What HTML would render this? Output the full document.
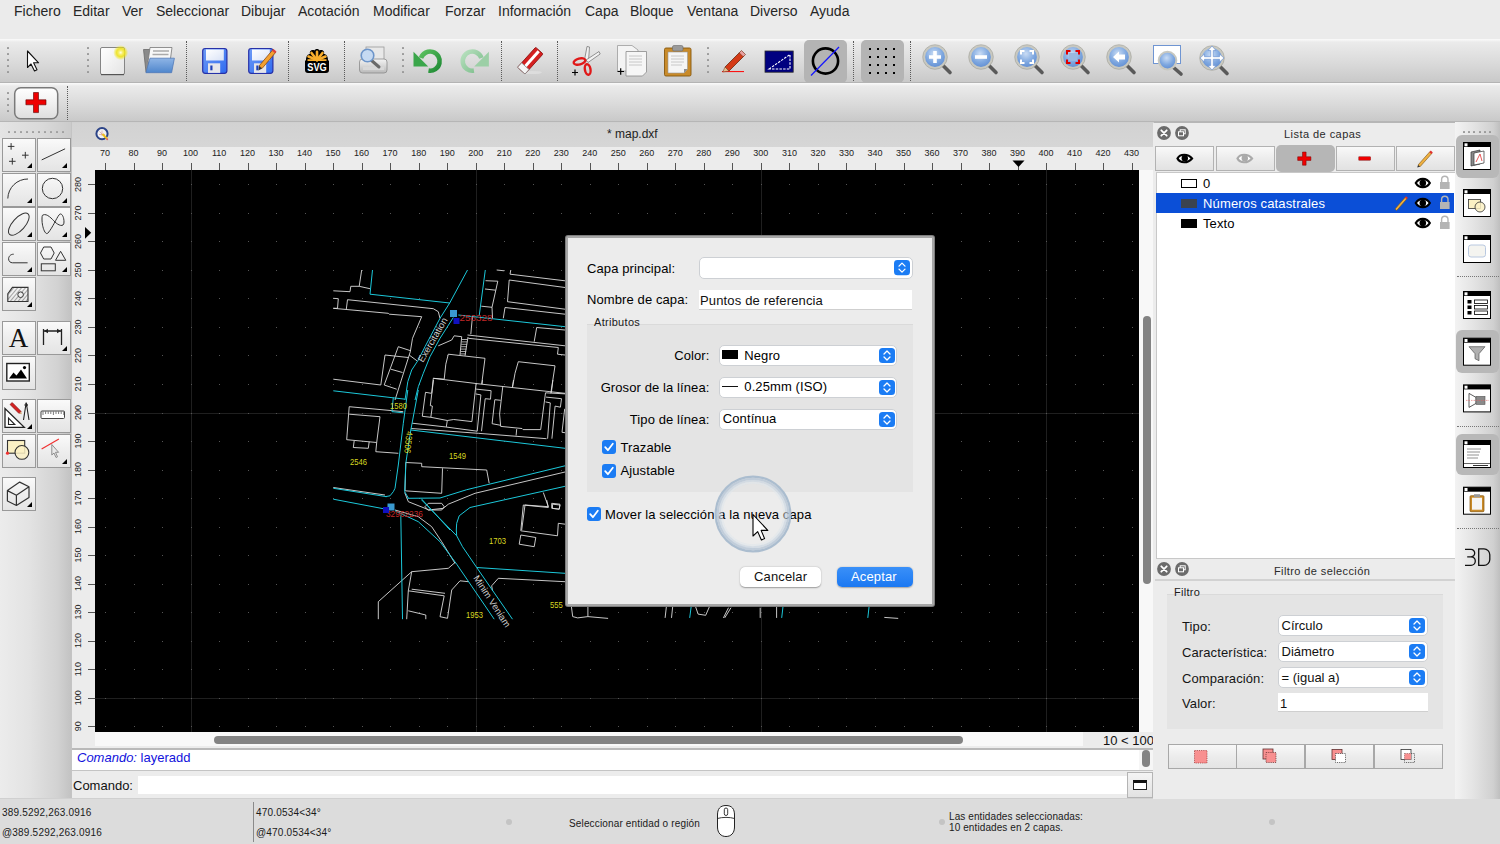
<!DOCTYPE html>
<html><head><meta charset="utf-8">
<style>
*{margin:0;padding:0;box-sizing:border-box}
html,body{width:1500px;height:844px;overflow:hidden;background:#ebebeb;font-family:"Liberation Sans",sans-serif;color:#222}
.a{position:absolute}
.t{position:absolute;white-space:nowrap;line-height:1}
svg{position:absolute;overflow:visible}
.tb{background:linear-gradient(#f6f6f6 0,#ebebeb 2px,#dadada 55%,#c9c9c9 100%)}
.grip i{position:absolute;width:2.4px;height:2.4px;background:#9a9a9a;border-radius:0.5px}
.vsep{position:absolute;width:0;border-left:1px dotted #5a5a5a}
.btn{position:absolute;background:linear-gradient(#fafafa,#f0f0f0 40%,#e4e4e4);border:1px solid #999}
.tri{position:absolute;right:3px;bottom:3px;width:0;height:0;border-left:5px solid transparent;border-bottom:5px solid #000}
</style></head><body>
<div class="a" style="left:0;top:0;width:1500px;height:39px;background:#ebebeb"><span class="t" style="left:14px;top:4px;font-size:14px;color:#262626">Fichero</span><span class="t" style="left:73px;top:4px;font-size:14px;color:#262626">Editar</span><span class="t" style="left:122px;top:4px;font-size:14px;color:#262626">Ver</span><span class="t" style="left:156px;top:4px;font-size:14px;color:#262626">Seleccionar</span><span class="t" style="left:241px;top:4px;font-size:14px;color:#262626">Dibujar</span><span class="t" style="left:298px;top:4px;font-size:14px;color:#262626">Acotación</span><span class="t" style="left:373px;top:4px;font-size:14px;color:#262626">Modificar</span><span class="t" style="left:445px;top:4px;font-size:14px;color:#262626">Forzar</span><span class="t" style="left:498px;top:4px;font-size:14px;color:#262626">Información</span><span class="t" style="left:585px;top:4px;font-size:14px;color:#262626">Capa</span><span class="t" style="left:630px;top:4px;font-size:14px;color:#262626">Bloque</span><span class="t" style="left:687px;top:4px;font-size:14px;color:#262626">Ventana</span><span class="t" style="left:750px;top:4px;font-size:14px;color:#262626">Diverso</span><span class="t" style="left:810px;top:4px;font-size:14px;color:#262626">Ayuda</span></div>
<div class="a tb" style="left:0;top:39px;width:1500px;height:44px;border-top:1px solid #f8f8f8;border-bottom:1px solid #b4b4b4"></div><div class="a tb" style="left:0;top:83px;width:1500px;height:40px;border-top:1px solid #f8f8f8;border-bottom:2px solid #b6b6b6"></div><div class="grip"><i style="left:7px;top:47px"></i><i style="left:7px;top:53px"></i><i style="left:7px;top:59px"></i><i style="left:7px;top:65px"></i><i style="left:7px;top:71px"></i><i style="left:87px;top:47px"></i><i style="left:87px;top:53px"></i><i style="left:87px;top:59px"></i><i style="left:87px;top:65px"></i><i style="left:87px;top:71px"></i><i style="left:402px;top:47px"></i><i style="left:402px;top:53px"></i><i style="left:402px;top:59px"></i><i style="left:402px;top:65px"></i><i style="left:402px;top:71px"></i><i style="left:707px;top:47px"></i><i style="left:707px;top:53px"></i><i style="left:707px;top:59px"></i><i style="left:707px;top:65px"></i><i style="left:707px;top:71px"></i><i style="left:7px;top:92px"></i><i style="left:7px;top:98px"></i><i style="left:7px;top:104px"></i><i style="left:7px;top:110px"></i></div><div class="vsep" style="left:186px;top:41px;height:40px"></div><div class="vsep" style="left:288px;top:41px;height:40px"></div><div class="vsep" style="left:344px;top:41px;height:40px"></div><div class="vsep" style="left:501px;top:41px;height:40px"></div><div class="vsep" style="left:557px;top:41px;height:40px"></div><div class="vsep" style="left:853px;top:41px;height:40px"></div><div class="vsep" style="left:910px;top:41px;height:40px"></div><div class="vsep" style="left:67px;top:86px;height:34px"></div><svg style="left:0;top:0" width="1500" height="122" viewBox="0 0 1500 122">
<defs>
<linearGradient id="gPage" x1="0" y1="0" x2="1" y2="1"><stop offset="0" stop-color="#ffffff"/><stop offset="1" stop-color="#e4e4e4"/></linearGradient>
<radialGradient id="gGlow"><stop offset="0" stop-color="#fffde8"/><stop offset="0.25" stop-color="#f8f070"/><stop offset="0.55" stop-color="#eee21a" stop-opacity="0.9"/><stop offset="1" stop-color="#f0e800" stop-opacity="0"/></radialGradient>
<linearGradient id="gBlueF" x1="0" y1="0" x2="0" y2="1"><stop offset="0" stop-color="#8fb5e6"/><stop offset="1" stop-color="#4f86cc"/></linearGradient>
<linearGradient id="gFlop" x1="0" y1="0" x2="1" y2="1"><stop offset="0" stop-color="#6f9cf6"/><stop offset="1" stop-color="#2f6af0"/></linearGradient>
<linearGradient id="gLbl" x1="0" y1="0" x2="1" y2="1"><stop offset="0" stop-color="#ffffff"/><stop offset="1" stop-color="#d9e2f6"/></linearGradient>
<linearGradient id="gPrn" x1="0" y1="0" x2="0" y2="1"><stop offset="0" stop-color="#f4f4f4"/><stop offset="1" stop-color="#b9b9b9"/></linearGradient>
<radialGradient id="gZoom" cx="0.45" cy="0.35" r="0.7"><stop offset="0" stop-color="#c9dcf4"/><stop offset="0.55" stop-color="#7fa8e0"/><stop offset="1" stop-color="#5a88cf"/></radialGradient>
<linearGradient id="gBtn" x1="0" y1="0" x2="0" y2="1"><stop offset="0" stop-color="#ffffff"/><stop offset="0.5" stop-color="#f0f0f0"/><stop offset="1" stop-color="#dedede"/></linearGradient>
</defs>
<!-- pointer -->
<path d="M27.5,51 L27.5,67.5 L31,64 L34.5,71 L37,69.8 L33.6,62.8 L38.6,62.8 Z" fill="#fff" stroke="#111" stroke-width="1.1" stroke-linejoin="round"/>
<!-- new doc -->
<rect x="100.5" y="47.5" width="24" height="27" rx="1.5" fill="url(#gPage)" stroke="#858585"/>
<line x1="101" y1="74.6" x2="124" y2="74.6" stroke="#555" stroke-width="1.2"/>
<circle cx="120.7" cy="52.6" r="7.5" fill="url(#gGlow)"/>
<!-- open folder -->
<path d="M143.5,49.5 L150,49.5 L150,72 L146,72 Z" fill="#8a8a8a" stroke="#6a6a6a" stroke-width="0.8"/>
<path d="M150,47.5 L172,47.5 L170,62 L148,62 Z" fill="#f7f7f7" stroke="#777" stroke-width="0.8"/>
<line x1="153" y1="51" x2="169" y2="51" stroke="#aaa" stroke-width="1.5"/>
<line x1="152.5" y1="54.5" x2="168.5" y2="54.5" stroke="#aaa" stroke-width="1.5"/>
<path d="M150,58.2 L174.4,58.2 L171.6,72.7 L145.9,72.7 Z" fill="url(#gBlueF)" stroke="#5079b8" stroke-width="0.8"/>
<!-- save -->
<rect x="202.7" y="48.5" width="24.2" height="24.8" rx="2.5" fill="url(#gFlop)" stroke="#2731a8" stroke-width="1.2"/>
<rect x="206" y="49.5" width="17.8" height="11" fill="url(#gLbl)"/>
<rect x="208" y="63.3" width="12.2" height="9.6" fill="#e6e6ea"/>
<rect x="210.3" y="65.5" width="2.2" height="4.8" fill="#1d3fb8"/>
<!-- save as -->
<rect x="248.7" y="48.5" width="24.2" height="24.8" rx="2.5" fill="url(#gFlop)" stroke="#2731a8" stroke-width="1.2"/>
<rect x="252" y="49.5" width="17.8" height="11" fill="url(#gLbl)"/>
<rect x="254" y="63.3" width="12.2" height="9.6" fill="#e6e6ea"/>
<rect x="256.3" y="65.5" width="2.2" height="4.8" fill="#1d3fb8"/>
<path d="M259,66 L273,49.5 L276,52 L262,68.5 Z" fill="#f3a030" stroke="#8a4a10" stroke-width="0.8"/>
<path d="M259,66 L262,68.5 L258.5,70.5 Z" fill="#333"/>
<path d="M272,50.7 L273.5,49 L276.5,51.5 L275,53.2 Z" fill="#e04040"/>
<!-- svg -->
<path d="M306,60 C306,56 308,54 310,54 C309,51 312,49 314.5,50.5 C315,48.5 319,48.5 319.5,50.5 C322,49 325,51 324,54 C326,54 328,56 328,60 L329,61 L329,70 C329,72 328,73 326,73 L308,73 C306,73 305,72 305,70 L305,61 Z" fill="#000"/>
<g stroke="#f9ae2c" stroke-width="2.6" stroke-linecap="round">
<line x1="317" y1="60" x2="317" y2="51.8"/><line x1="317" y1="60" x2="311.5" y2="53"/><line x1="317" y1="60" x2="322.5" y2="53"/><line x1="317" y1="60" x2="308.5" y2="56.5"/><line x1="317" y1="60" x2="325.5" y2="56.5"/>
</g>
<rect x="307.5" y="59.2" width="19" height="1.8" fill="#f9ae2c"/>
<text x="317" y="71.3" font-family="Liberation Sans" font-weight="bold" font-size="11" fill="#fff" text-anchor="middle" textLength="19.5" lengthAdjust="spacingAndGlyphs">SVG</text>
<!-- print preview -->
<rect x="366" y="47" width="18" height="14" fill="#e8e8e8" stroke="#9a9a9a" stroke-width="0.8"/>
<rect x="359.5" y="59" width="27.5" height="14" rx="3" fill="url(#gPrn)" stroke="#8c8c8c" stroke-width="0.8"/>
<rect x="363" y="67" width="21" height="3" fill="#d8d8d8"/>
<line x1="371" y1="60" x2="379" y2="67" stroke="#6a6a6a" stroke-width="3" stroke-linecap="round"/>
<circle cx="367.5" cy="55.5" r="6.3" fill="#c6daf2" stroke="#6d95c9" stroke-width="1.6"/>
<!-- undo -->
<defs><linearGradient id="gUndo" x1="0" y1="0" x2="1" y2="1"><stop offset="0" stop-color="#5cc060"/><stop offset="1" stop-color="#1f8a34"/></linearGradient>
<linearGradient id="gRedo" x1="0" y1="0" x2="1" y2="1"><stop offset="0" stop-color="#b8e0bf"/><stop offset="1" stop-color="#7bbd8a"/></linearGradient></defs>
<path d="M421,58 A9.6,9.6 0 1 1 428.5,70.6" fill="none" stroke="url(#gUndo)" stroke-width="4.6"/>
<path d="M413.5,51.8 L413.5,66.6 L428.2,66.6 Z" fill="#3aa64a"/>
<path d="M481.4,58 A9.6,9.6 0 1 0 473.9,70.6" fill="none" stroke="url(#gRedo)" stroke-width="4.6"/>
<path d="M488.9,51.8 L488.9,66.6 L474.2,66.6 Z" fill="#9ccfa6"/>
<!-- eraser -->
<ellipse cx="532" cy="72.5" rx="10" ry="1.6" fill="#ddd"/>
<g transform="rotate(-48 530 61)">
<rect x="517" y="56" width="27" height="10" rx="1" fill="#d42020" stroke="#8a1010" stroke-width="0.8"/>
<rect x="518" y="59.5" width="25" height="3" fill="#fff"/>
<rect x="517" y="56" width="6" height="10" fill="#f4f4f4" stroke="#888" stroke-width="0.8"/>
</g>
<!-- scissors -->
<path d="M584.5,60 L587,46.5 L589.5,47 L588.5,61 Z" fill="#f2f2f2" stroke="#7a7a7a" stroke-width="0.8"/>
<path d="M586,60 L599,51.5 L600.2,54 L588,62.5 Z" fill="#f2f2f2" stroke="#7a7a7a" stroke-width="0.8"/>
<ellipse cx="579.5" cy="61.5" rx="6" ry="3" transform="rotate(-15 579.5 61.5)" fill="none" stroke="#e01818" stroke-width="2.4"/>
<ellipse cx="587.7" cy="69.5" rx="2.8" ry="5.3" transform="rotate(-10 587.7 69.5)" fill="none" stroke="#e01818" stroke-width="2.4"/>
<path d="M572,72.5 h6 M575,69.5 v6" stroke="#000" stroke-width="1.2"/>
<!-- copy -->
<path d="M617.5,45.5 L632,45.5 L638,50 L638,71 L617.5,71 Z" fill="#f4f4f4" stroke="#9c9c9c" stroke-width="0.8"/>
<path d="M626,51.5 L646.5,51.5 L646.5,72 L642.5,76 L626,76 Z" fill="#f6f6f6" stroke="#8c8c8c" stroke-width="0.8"/>
<path d="M629,56 h13 M629,59 h13 M629,62 h13 M629,65 h13" stroke="#bdbdbd" stroke-width="0.8"/>
<path d="M617.5,71.5 h6.5 M620.7,68.3 v6.5" stroke="#000" stroke-width="1.2"/>
<!-- paste -->
<rect x="664.5" y="48" width="26.5" height="28" rx="1.5" fill="#c98b2a" stroke="#87570c" stroke-width="0.9"/>
<path d="M668,52 L687.5,52 L687.5,69 L684,73 L668,73 Z" fill="#f5f5f5" stroke="#999" stroke-width="0.6"/>
<path d="M671,56 h13 M671,59 h13 M671,62 h13 M671,65 h11" stroke="#bcbcbc" stroke-width="0.8"/>
<path d="M684,73 L687.5,69 L684,69 Z" fill="#8f8f8f"/>
<rect x="672.5" y="45.5" width="10.5" height="5.5" rx="1.5" fill="#9a9a9a" stroke="#6a6a6a" stroke-width="0.6"/>
<!-- pencil -->
<line x1="722" y1="71.6" x2="744" y2="71.6" stroke="#ff0000" stroke-width="1"/>
<path d="M725,67 L740,52 L744,56 L729,71 Z" fill="#d43a16" stroke="#6a2a10" stroke-width="0.8"/>
<path d="M739.2,52.8 L741.5,50.5 L745.5,54.5 L743.2,56.8 Z" fill="#e8a0a0" stroke="#6a2a10" stroke-width="0.6"/>
<path d="M725,67 L729,71 L722.8,72 Z" fill="#e8c090" stroke="#6a2a10" stroke-width="0.5"/>
<!-- blue rect -->
<rect x="765" y="51" width="28.2" height="21.2" fill="#000080" stroke="#2a2a2a" stroke-width="0.8"/>
<path d="M769,69 L790,54.5 L790,69 Z" fill="none" stroke="#ffffff" stroke-width="1.1" stroke-dasharray="2.5,1.2"/>
<!-- selected circle btn -->
<rect x="804" y="40" width="43" height="42.7" rx="5" fill="#b4b4b4"/>
<circle cx="825.5" cy="61" r="12.6" fill="none" stroke="#000" stroke-width="2.6"/>
<line x1="811" y1="75.5" x2="839" y2="47" stroke="#1414ff" stroke-width="1.2"/>
<!-- grid btn -->
<rect x="861" y="40" width="43" height="42.7" rx="5" fill="#b4b4b4"/>
<g fill="#000">
<rect x="869" y="48" width="2" height="2"/><rect x="877" y="48" width="2" height="2"/><rect x="885" y="48" width="2" height="2"/><rect x="893" y="48" width="2" height="2"/><rect x="869" y="56" width="2" height="2"/><rect x="877" y="56" width="2" height="2"/><rect x="885" y="56" width="2" height="2"/><rect x="893" y="56" width="2" height="2"/><rect x="869" y="64" width="2" height="2"/><rect x="877" y="64" width="2" height="2"/><rect x="885" y="64" width="2" height="2"/><rect x="893" y="64" width="2" height="2"/><rect x="869" y="72" width="2" height="2"/><rect x="877" y="72" width="2" height="2"/><rect x="885" y="72" width="2" height="2"/><rect x="893" y="72" width="2" height="2"/></g>
<line x1="942" y1="64.5" x2="950" y2="72.5" stroke="#5a5a5a" stroke-width="3.6" stroke-linecap="round"/><circle cx="935" cy="57" r="11" fill="url(#gZoom)" stroke="#c8c8c0" stroke-width="2.2"/><circle cx="935" cy="57" r="12.3" fill="none" stroke="#9a9a90" stroke-width="0.6"/><path d="M929,57 h12 M935,51 v12" stroke="#fff" stroke-width="3.6"/><line x1="988" y1="64.5" x2="996" y2="72.5" stroke="#5a5a5a" stroke-width="3.6" stroke-linecap="round"/><circle cx="981" cy="57" r="11" fill="url(#gZoom)" stroke="#c8c8c0" stroke-width="2.2"/><circle cx="981" cy="57" r="12.3" fill="none" stroke="#9a9a90" stroke-width="0.6"/><path d="M975,57 h12" stroke="#fff" stroke-width="3.6"/><line x1="1034" y1="64.5" x2="1042" y2="72.5" stroke="#5a5a5a" stroke-width="3.6" stroke-linecap="round"/><circle cx="1027" cy="57" r="11" fill="url(#gZoom)" stroke="#c8c8c0" stroke-width="2.2"/><circle cx="1027" cy="57" r="12.3" fill="none" stroke="#9a9a90" stroke-width="0.6"/><path d="M1021,54.5 v-3.5 h3.5 M1029.5,51 h3.5 v3.5 M1033,59.5 v3.5 h-3.5 M1024.5,63 h-3.5 v-3.5" fill="none" stroke="#fff" stroke-width="2"/><line x1="1080" y1="64.5" x2="1088" y2="72.5" stroke="#5a5a5a" stroke-width="3.6" stroke-linecap="round"/><circle cx="1073" cy="57" r="11" fill="url(#gZoom)" stroke="#c8c8c0" stroke-width="2.2"/><circle cx="1073" cy="57" r="12.3" fill="none" stroke="#9a9a90" stroke-width="0.6"/><path d="M1067,54.5 v-3.5 h3.5 M1075.5,51 h3.5 v3.5 M1079,59.5 v3.5 h-3.5 M1070.5,63 h-3.5 v-3.5" fill="none" stroke="#e00000" stroke-width="2"/><rect x="1069" y="53" width="8" height="8" fill="#9ab8e0"/><line x1="1126" y1="64.5" x2="1134" y2="72.5" stroke="#5a5a5a" stroke-width="3.6" stroke-linecap="round"/><circle cx="1119" cy="57" r="11" fill="url(#gZoom)" stroke="#c8c8c0" stroke-width="2.2"/><circle cx="1119" cy="57" r="12.3" fill="none" stroke="#9a9a90" stroke-width="0.6"/><path d="M1113,57 L1119,51.5 L1119,54.5 L1125,54.5 L1125,59.5 L1119,59.5 L1119,62.5 Z" fill="#fff"/><rect x="1153.5" y="45.5" width="27" height="18" fill="#fff" stroke="#6f95d2" stroke-width="1"/><line x1="1173" y1="67" x2="1181" y2="74" stroke="#5a5a5a" stroke-width="3.6" stroke-linecap="round"/><circle cx="1167.5" cy="60.6" r="8.8" fill="url(#gZoom)" stroke="#c8c8c0" stroke-width="2"/><line x1="1219" y1="65.5" x2="1227" y2="73.5" stroke="#5a5a5a" stroke-width="3.6" stroke-linecap="round"/><circle cx="1212" cy="58" r="11" fill="url(#gZoom)" stroke="#c8c8c0" stroke-width="2.2"/><circle cx="1212" cy="58" r="12.3" fill="none" stroke="#9a9a90" stroke-width="0.6"/><path d="M1212,46 L1216,50.5 L1213.3,50.5 L1213.3,56.7 L1219.5,56.7 L1219.5,54 L1224,58 L1219.5,62 L1219.5,59.3 L1213.3,59.3 L1213.3,65.5 L1216,65.5 L1212,70 L1208,65.5 L1210.7,65.5 L1210.7,59.3 L1204.5,59.3 L1204.5,62 L1200,58 L1204.5,54 L1204.5,56.7 L1210.7,56.7 L1210.7,50.5 L1208,50.5 Z" fill="#fff" stroke="#6f95d2" stroke-width="0.7"/><rect x="14.7" y="87.7" width="43" height="31" rx="6" fill="url(#gBtn)" stroke="#7a7a7a" stroke-width="1.5"/><path d="M33.5,92.5 h5 v7.3 h7.5 v5 h-7.5 v7.8 h-5 v-7.8 h-7.6 v-5 h7.6 Z" fill="#ee0000" stroke="#5a0000" stroke-width="0.6"/></svg>
<div class="a" style="left:0;top:122px;width:72px;height:677px;background:linear-gradient(90deg,#ececec 0,#e3e3e3 40%,#d2d2d2 80%,#c3c3c3 98%,#d6d6d6 100%)"></div><div class="a" style="left:0;top:122px;width:71px;height:16px;background:linear-gradient(90deg,#e4e4e4,#d9d9d9 60%,#cbcbcb)"></div><div class="a" style="left:71px;top:122px;width:1px;height:677px;background:#c4c4c4"></div><div class="grip"><i style="left:7.5px;top:131px;width:2.2px;height:2.2px;background:#a0a0a0"></i><i style="left:13.5px;top:131px;width:2.2px;height:2.2px;background:#a0a0a0"></i><i style="left:19.5px;top:131px;width:2.2px;height:2.2px;background:#a0a0a0"></i><i style="left:25.5px;top:131px;width:2.2px;height:2.2px;background:#a0a0a0"></i><i style="left:31.5px;top:131px;width:2.2px;height:2.2px;background:#a0a0a0"></i><i style="left:37.5px;top:131px;width:2.2px;height:2.2px;background:#a0a0a0"></i><i style="left:43.5px;top:131px;width:2.2px;height:2.2px;background:#a0a0a0"></i><i style="left:49.5px;top:131px;width:2.2px;height:2.2px;background:#a0a0a0"></i><i style="left:55.5px;top:131px;width:2.2px;height:2.2px;background:#a0a0a0"></i><i style="left:61.5px;top:131px;width:2.2px;height:2.2px;background:#a0a0a0"></i></div><div class="btn" style="left:1.5px;top:137.6px;width:34px;height:34px"><div class="tri"></div></div><div class="btn" style="left:36.5px;top:137.6px;width:34px;height:34px"><div class="tri"></div></div><div class="btn" style="left:1.5px;top:172.5px;width:34px;height:34px"><div class="tri"></div></div><div class="btn" style="left:36.5px;top:172.5px;width:34px;height:34px"><div class="tri"></div></div><div class="btn" style="left:1.5px;top:207.3px;width:34px;height:34px"><div class="tri"></div></div><div class="btn" style="left:36.5px;top:207.3px;width:34px;height:34px"><div class="tri"></div></div><div class="btn" style="left:1.5px;top:242.2px;width:34px;height:34px"><div class="tri"></div></div><div class="btn" style="left:36.5px;top:242.2px;width:34px;height:34px"><div class="tri"></div></div><div class="btn" style="left:1.5px;top:277px;width:34px;height:34px"><div class="tri"></div></div><div class="btn" style="left:1.5px;top:320.6px;width:34px;height:34px"></div><div class="btn" style="left:36.5px;top:320.6px;width:34px;height:34px"><div class="tri"></div></div><div class="btn" style="left:1.5px;top:355.7px;width:34px;height:34px"></div><div class="btn" style="left:1.5px;top:398.5px;width:34px;height:34px"><div class="tri"></div></div><div class="btn" style="left:36.5px;top:398.5px;width:34px;height:34px"></div><div class="btn" style="left:1.5px;top:433.5px;width:34px;height:34px"></div><div class="btn" style="left:36.5px;top:433.5px;width:34px;height:34px"><div class="tri"></div></div><div class="btn" style="left:1.5px;top:476.5px;width:34px;height:34px"><div class="tri"></div></div><svg style="left:0;top:0" width="72" height="520" viewBox="0 0 72 520"><g fill="none" stroke="#333" stroke-width="1"><path d="M7.8,146.4 h6.6 M11.1,143.1 v6.6"/><path d="M22.0,155.2 h6.6 M25.3,151.89999999999998 v6.6"/><path d="M9.0,161.3 h6.6 M12.3,158.0 v6.6"/><line x1="41.7" y1="159.9" x2="65.1" y2="148.8"/><path d="M7.8,198.5 A20,20 0 0 1 28,179"/><circle cx="52.5" cy="188.5" r="10.2"/><ellipse cx="18.8" cy="224.2" rx="13.8" ry="6.2" transform="rotate(-48 18.8 224.2)"/><path d="M43,215 C47,213 52,219 55,222 C58,225 64,228 64,222 C64,216 61,212 59,215 C56,219 53,227 48,233 C45,236 42,226 42,220 C42,217 42,215 43,215 Z"/><path d="M13.7,254.2 C10,254.2 8.6,257 8.6,258.8 C8.6,261.3 10.3,262.8 12.6,262.8 L27.6,262.8"/><path d="M40.5,253 L43.7,247 L51,247 L54.2,253 L51,259 L43.7,259 Z"/><path d="M55.5,260.3 L60.6,251.3 L65.8,260.3 Z"/><rect x="41.3" y="263.8" width="14" height="7"/></g><defs><pattern id="hp" width="3" height="3" patternUnits="userSpaceOnUse" patternTransform="rotate(40)"><line x1="0" y1="0" x2="0" y2="3" stroke="#444" stroke-width="0.9"/></pattern></defs><path d="M7.8,293.7 L12.4,287.4 L28,287.4 L28,301.5 L7.8,301.5 Z" fill="url(#hp)" stroke="#333" stroke-width="1.1"/><circle cx="20.6" cy="294.7" r="2.8" fill="#eee" stroke="#333" stroke-width="1"/><text x="18.5" y="347" font-family="Liberation Serif" font-size="27" text-anchor="middle" fill="#111">A</text><g stroke="#222" stroke-width="1.3" fill="none"><path d="M43.5,329 v16 M61.5,329 v16 M44,331 h17"/></g><path d="M44,331 l4,-2.2 v4.4 Z M61,331 l-4,-2.2 v4.4 Z" fill="#222"/><rect x="6.8" y="363.5" width="22.5" height="17.5" fill="#fff" stroke="#222" stroke-width="1.4"/><path d="M9,378.5 L13.5,372.5 L16.5,375.5 L21,369.5 L27,378.5 Z" fill="#000"/><circle cx="24.5" cy="367.6" r="1.6" fill="#000"/><path d="M5,408.5 L5,427.4 L24.3,427.4 Z" fill="#fff" stroke="#222" stroke-width="1.3"/><path d="M8.5,418 L8.5,424.5 L14.8,424.5 Z" fill="none" stroke="#222" stroke-width="1.1"/><path d="M10,404.5 L12.2,402.5 L21.2,411.5 L19,413.5 Z" fill="#d42222" stroke="#7a1010" stroke-width="0.6"/><path d="M19,413.5 L21.2,411.5 L21.8,414.2 Z" fill="#d0a070"/><path d="M26.2,402.5 L23.5,420 M26.2,402.5 L29,420" stroke="#222" stroke-width="1.1" fill="none"/><circle cx="26.2" cy="405" r="1.3" fill="none" stroke="#222" stroke-width="0.8"/><rect x="41" y="411" width="23.5" height="7.5" rx="1" fill="#fff" stroke="#444" stroke-width="1"/><path d="M43.0,411.5 v3.5 M45.6,411.5 v2.5 M48.2,411.5 v2.5 M50.8,411.5 v2.5 M53.4,411.5 v3.5 M56.0,411.5 v2.5 M58.6,411.5 v2.5 M61.2,411.5 v2.5 M63.8,411.5 v3.5 " stroke="#444" stroke-width="0.7"/><rect x="7.5" y="440.5" width="17.2" height="12.7" fill="#fbf1c4" stroke="#333" stroke-width="1.1"/><circle cx="21.9" cy="452.4" r="6.9" fill="#fbf1c4" fill-opacity="0.85" stroke="#333" stroke-width="1.1"/><circle cx="7.5" cy="453.2" r="1.6" fill="#f03030"/><line x1="41.6" y1="449" x2="58.9" y2="439" stroke="#f03030" stroke-width="1.2"/><path d="M51.8,444.5 L51.8,455 L54,453 L56,457.5 L57.5,456.8 L55.5,452.3 L58.6,452.3 Z" fill="#eaeaea" stroke="#777" stroke-width="0.8"/><path d="M7.4,490.6 L19.7,482.1 L29,486.8 L29,497.5 L16.4,505.5 L7.4,501 Z M7.4,490.6 L16.4,495.2 L29,486.8 M16.4,495.2 L16.4,505.5" fill="none" stroke="#333" stroke-width="1.2" stroke-linejoin="round"/></svg>
<div class="a" style="left:72px;top:122px;width:1082px;height:624px;background:#d0d0d0"></div><div class="a" style="left:72px;top:123px;width:1081px;height:24px;background:linear-gradient(#d2d2d2,#d6d6d6)"></div><span class="t" style="left:607px;top:128px;font-size:12px;color:#1e1e1e">* map.dxf</span><svg style="left:93px;top:125px" width="18" height="18" viewBox="0 0 18 18">
<circle cx="9" cy="8.7" r="5.6" fill="#f2f2f2" stroke="#2c4488" stroke-width="2"/>
<path d="M6,9.5 L12,9.5 M9,5.5 L9,11 M6.5,6.5 L11,11" stroke="#d08080" stroke-width="0.5"/>
<line x1="9.5" y1="9" x2="14" y2="13.8" stroke="#f0c020" stroke-width="2"/><circle cx="14.2" cy="14.2" r="1" fill="#e06060"/>
</svg><div class="a" style="left:72px;top:147px;width:1081px;height:23px;background:#ececec"></div><div class="a" style="left:72px;top:170px;width:23px;height:562px;background:#ececec"></div><div class="a" style="left:72px;top:732px;width:23px;height:14px;background:#ececec"></div><div class="a" style="left:95px;top:170px;width:1044px;height:562px;background:#000"></div><svg style="left:0;top:0" width="1500" height="844" viewBox="0 0 1500 844"><g stroke="#555" stroke-width="1"><line x1="105.5" y1="163" x2="105.5" y2="170"/><line x1="134.5" y1="163" x2="134.5" y2="170"/><line x1="162.5" y1="163" x2="162.5" y2="170"/><line x1="191.5" y1="163" x2="191.5" y2="170"/><line x1="219.5" y1="163" x2="219.5" y2="170"/><line x1="248.5" y1="163" x2="248.5" y2="170"/><line x1="276.5" y1="163" x2="276.5" y2="170"/><line x1="305.5" y1="163" x2="305.5" y2="170"/><line x1="333.5" y1="163" x2="333.5" y2="170"/><line x1="362.5" y1="163" x2="362.5" y2="170"/><line x1="390.5" y1="163" x2="390.5" y2="170"/><line x1="419.5" y1="163" x2="419.5" y2="170"/><line x1="447.5" y1="163" x2="447.5" y2="170"/><line x1="476.5" y1="163" x2="476.5" y2="170"/><line x1="504.5" y1="163" x2="504.5" y2="170"/><line x1="533.5" y1="163" x2="533.5" y2="170"/><line x1="561.5" y1="163" x2="561.5" y2="170"/><line x1="590.5" y1="163" x2="590.5" y2="170"/><line x1="618.5" y1="163" x2="618.5" y2="170"/><line x1="647.5" y1="163" x2="647.5" y2="170"/><line x1="675.5" y1="163" x2="675.5" y2="170"/><line x1="704.5" y1="163" x2="704.5" y2="170"/><line x1="732.5" y1="163" x2="732.5" y2="170"/><line x1="761.5" y1="163" x2="761.5" y2="170"/><line x1="789.5" y1="163" x2="789.5" y2="170"/><line x1="818.5" y1="163" x2="818.5" y2="170"/><line x1="846.5" y1="163" x2="846.5" y2="170"/><line x1="875.5" y1="163" x2="875.5" y2="170"/><line x1="904.5" y1="163" x2="904.5" y2="170"/><line x1="932.5" y1="163" x2="932.5" y2="170"/><line x1="961.5" y1="163" x2="961.5" y2="170"/><line x1="989.5" y1="163" x2="989.5" y2="170"/><line x1="1018.5" y1="163" x2="1018.5" y2="170"/><line x1="1046.5" y1="163" x2="1046.5" y2="170"/><line x1="1075.5" y1="163" x2="1075.5" y2="170"/><line x1="1103.5" y1="163" x2="1103.5" y2="170"/><line x1="1132.5" y1="163" x2="1132.5" y2="170"/><line x1="88" y1="726.5" x2="95" y2="726.5"/><line x1="88" y1="698.5" x2="95" y2="698.5"/><line x1="88" y1="669.5" x2="95" y2="669.5"/><line x1="88" y1="641.5" x2="95" y2="641.5"/><line x1="88" y1="612.5" x2="95" y2="612.5"/><line x1="88" y1="584.5" x2="95" y2="584.5"/><line x1="88" y1="555.5" x2="95" y2="555.5"/><line x1="88" y1="527.5" x2="95" y2="527.5"/><line x1="88" y1="498.5" x2="95" y2="498.5"/><line x1="88" y1="470.5" x2="95" y2="470.5"/><line x1="88" y1="441.5" x2="95" y2="441.5"/><line x1="88" y1="413.5" x2="95" y2="413.5"/><line x1="88" y1="384.5" x2="95" y2="384.5"/><line x1="88" y1="355.5" x2="95" y2="355.5"/><line x1="88" y1="327.5" x2="95" y2="327.5"/><line x1="88" y1="298.5" x2="95" y2="298.5"/><line x1="88" y1="270.5" x2="95" y2="270.5"/><line x1="88" y1="241.5" x2="95" y2="241.5"/><line x1="88" y1="213.5" x2="95" y2="213.5"/><line x1="88" y1="184.5" x2="95" y2="184.5"/></g><g font-family="Liberation Sans" font-size="9" fill="#222" text-anchor="middle"><text x="105.0" y="156">70</text><text x="133.5" y="156">80</text><text x="162.0" y="156">90</text><text x="190.5" y="156">100</text><text x="219.1" y="156">110</text><text x="247.6" y="156">120</text><text x="276.1" y="156">130</text><text x="304.6" y="156">140</text><text x="333.1" y="156">150</text><text x="361.6" y="156">160</text><text x="390.1" y="156">170</text><text x="418.7" y="156">180</text><text x="447.2" y="156">190</text><text x="475.7" y="156">200</text><text x="504.2" y="156">210</text><text x="532.7" y="156">220</text><text x="561.2" y="156">230</text><text x="589.8" y="156">240</text><text x="618.3" y="156">250</text><text x="646.8" y="156">260</text><text x="675.3" y="156">270</text><text x="703.8" y="156">280</text><text x="732.3" y="156">290</text><text x="760.8" y="156">300</text><text x="789.4" y="156">310</text><text x="817.9" y="156">320</text><text x="846.4" y="156">330</text><text x="874.9" y="156">340</text><text x="903.4" y="156">350</text><text x="931.9" y="156">360</text><text x="960.5" y="156">370</text><text x="989.0" y="156">380</text><text x="1017.5" y="156">390</text><text x="1046.0" y="156">400</text><text x="1074.5" y="156">410</text><text x="1103.0" y="156">420</text><text x="1131.5" y="156">430</text><text transform="translate(81.4,726.2) rotate(-90)" x="0" y="0">90</text><text transform="translate(81.4,697.7) rotate(-90)" x="0" y="0">100</text><text transform="translate(81.4,669.2) rotate(-90)" x="0" y="0">110</text><text transform="translate(81.4,640.6) rotate(-90)" x="0" y="0">120</text><text transform="translate(81.4,612.1) rotate(-90)" x="0" y="0">130</text><text transform="translate(81.4,583.6) rotate(-90)" x="0" y="0">140</text><text transform="translate(81.4,555.1) rotate(-90)" x="0" y="0">150</text><text transform="translate(81.4,526.6) rotate(-90)" x="0" y="0">160</text><text transform="translate(81.4,498.1) rotate(-90)" x="0" y="0">170</text><text transform="translate(81.4,469.5) rotate(-90)" x="0" y="0">180</text><text transform="translate(81.4,441.0) rotate(-90)" x="0" y="0">190</text><text transform="translate(81.4,412.5) rotate(-90)" x="0" y="0">200</text><text transform="translate(81.4,384.0) rotate(-90)" x="0" y="0">210</text><text transform="translate(81.4,355.5) rotate(-90)" x="0" y="0">220</text><text transform="translate(81.4,327.0) rotate(-90)" x="0" y="0">230</text><text transform="translate(81.4,298.5) rotate(-90)" x="0" y="0">240</text><text transform="translate(81.4,269.9) rotate(-90)" x="0" y="0">250</text><text transform="translate(81.4,241.4) rotate(-90)" x="0" y="0">260</text><text transform="translate(81.4,212.9) rotate(-90)" x="0" y="0">270</text><text transform="translate(81.4,184.4) rotate(-90)" x="0" y="0">280</text></g><path d="M1012.5,160.5 L1024.5,160.5 L1018.5,167 Z" fill="#000"/><path d="M85,227 L85,238.7 L91.2,232.8 Z" fill="#000"/><g stroke="#1f1f1f" stroke-width="1"><line x1="191.5" y1="170" x2="191.5" y2="732"/><line x1="476.5" y1="170" x2="476.5" y2="732"/><line x1="761.5" y1="170" x2="761.5" y2="732"/><line x1="1046.5" y1="170" x2="1046.5" y2="732"/><line x1="95" y1="413.5" x2="1139" y2="413.5"/><line x1="95" y1="698.5" x2="1139" y2="698.5"/></g><g fill="#555"><rect x="105" y="726" width="1" height="1"/><rect x="105" y="698" width="1" height="1"/><rect x="105" y="669" width="1" height="1"/><rect x="105" y="641" width="1" height="1"/><rect x="105" y="612" width="1" height="1"/><rect x="105" y="584" width="1" height="1"/><rect x="105" y="555" width="1" height="1"/><rect x="105" y="527" width="1" height="1"/><rect x="105" y="498" width="1" height="1"/><rect x="105" y="470" width="1" height="1"/><rect x="105" y="441" width="1" height="1"/><rect x="105" y="413" width="1" height="1"/><rect x="105" y="384" width="1" height="1"/><rect x="105" y="355" width="1" height="1"/><rect x="105" y="327" width="1" height="1"/><rect x="105" y="298" width="1" height="1"/><rect x="105" y="270" width="1" height="1"/><rect x="105" y="241" width="1" height="1"/><rect x="105" y="213" width="1" height="1"/><rect x="105" y="184" width="1" height="1"/><rect x="134" y="726" width="1" height="1"/><rect x="134" y="698" width="1" height="1"/><rect x="134" y="669" width="1" height="1"/><rect x="134" y="641" width="1" height="1"/><rect x="134" y="612" width="1" height="1"/><rect x="134" y="584" width="1" height="1"/><rect x="134" y="555" width="1" height="1"/><rect x="134" y="527" width="1" height="1"/><rect x="134" y="498" width="1" height="1"/><rect x="134" y="470" width="1" height="1"/><rect x="134" y="441" width="1" height="1"/><rect x="134" y="413" width="1" height="1"/><rect x="134" y="384" width="1" height="1"/><rect x="134" y="355" width="1" height="1"/><rect x="134" y="327" width="1" height="1"/><rect x="134" y="298" width="1" height="1"/><rect x="134" y="270" width="1" height="1"/><rect x="134" y="241" width="1" height="1"/><rect x="134" y="213" width="1" height="1"/><rect x="134" y="184" width="1" height="1"/><rect x="162" y="726" width="1" height="1"/><rect x="162" y="698" width="1" height="1"/><rect x="162" y="669" width="1" height="1"/><rect x="162" y="641" width="1" height="1"/><rect x="162" y="612" width="1" height="1"/><rect x="162" y="584" width="1" height="1"/><rect x="162" y="555" width="1" height="1"/><rect x="162" y="527" width="1" height="1"/><rect x="162" y="498" width="1" height="1"/><rect x="162" y="470" width="1" height="1"/><rect x="162" y="441" width="1" height="1"/><rect x="162" y="413" width="1" height="1"/><rect x="162" y="384" width="1" height="1"/><rect x="162" y="355" width="1" height="1"/><rect x="162" y="327" width="1" height="1"/><rect x="162" y="298" width="1" height="1"/><rect x="162" y="270" width="1" height="1"/><rect x="162" y="241" width="1" height="1"/><rect x="162" y="213" width="1" height="1"/><rect x="162" y="184" width="1" height="1"/><rect x="191" y="726" width="1" height="1"/><rect x="191" y="698" width="1" height="1"/><rect x="191" y="669" width="1" height="1"/><rect x="191" y="641" width="1" height="1"/><rect x="191" y="612" width="1" height="1"/><rect x="191" y="584" width="1" height="1"/><rect x="191" y="555" width="1" height="1"/><rect x="191" y="527" width="1" height="1"/><rect x="191" y="498" width="1" height="1"/><rect x="191" y="470" width="1" height="1"/><rect x="191" y="441" width="1" height="1"/><rect x="191" y="413" width="1" height="1"/><rect x="191" y="384" width="1" height="1"/><rect x="191" y="355" width="1" height="1"/><rect x="191" y="327" width="1" height="1"/><rect x="191" y="298" width="1" height="1"/><rect x="191" y="270" width="1" height="1"/><rect x="191" y="241" width="1" height="1"/><rect x="191" y="213" width="1" height="1"/><rect x="191" y="184" width="1" height="1"/><rect x="219" y="726" width="1" height="1"/><rect x="219" y="698" width="1" height="1"/><rect x="219" y="669" width="1" height="1"/><rect x="219" y="641" width="1" height="1"/><rect x="219" y="612" width="1" height="1"/><rect x="219" y="584" width="1" height="1"/><rect x="219" y="555" width="1" height="1"/><rect x="219" y="527" width="1" height="1"/><rect x="219" y="498" width="1" height="1"/><rect x="219" y="470" width="1" height="1"/><rect x="219" y="441" width="1" height="1"/><rect x="219" y="413" width="1" height="1"/><rect x="219" y="384" width="1" height="1"/><rect x="219" y="355" width="1" height="1"/><rect x="219" y="327" width="1" height="1"/><rect x="219" y="298" width="1" height="1"/><rect x="219" y="270" width="1" height="1"/><rect x="219" y="241" width="1" height="1"/><rect x="219" y="213" width="1" height="1"/><rect x="219" y="184" width="1" height="1"/><rect x="248" y="726" width="1" height="1"/><rect x="248" y="698" width="1" height="1"/><rect x="248" y="669" width="1" height="1"/><rect x="248" y="641" width="1" height="1"/><rect x="248" y="612" width="1" height="1"/><rect x="248" y="584" width="1" height="1"/><rect x="248" y="555" width="1" height="1"/><rect x="248" y="527" width="1" height="1"/><rect x="248" y="498" width="1" height="1"/><rect x="248" y="470" width="1" height="1"/><rect x="248" y="441" width="1" height="1"/><rect x="248" y="413" width="1" height="1"/><rect x="248" y="384" width="1" height="1"/><rect x="248" y="355" width="1" height="1"/><rect x="248" y="327" width="1" height="1"/><rect x="248" y="298" width="1" height="1"/><rect x="248" y="270" width="1" height="1"/><rect x="248" y="241" width="1" height="1"/><rect x="248" y="213" width="1" height="1"/><rect x="248" y="184" width="1" height="1"/><rect x="276" y="726" width="1" height="1"/><rect x="276" y="698" width="1" height="1"/><rect x="276" y="669" width="1" height="1"/><rect x="276" y="641" width="1" height="1"/><rect x="276" y="612" width="1" height="1"/><rect x="276" y="584" width="1" height="1"/><rect x="276" y="555" width="1" height="1"/><rect x="276" y="527" width="1" height="1"/><rect x="276" y="498" width="1" height="1"/><rect x="276" y="470" width="1" height="1"/><rect x="276" y="441" width="1" height="1"/><rect x="276" y="413" width="1" height="1"/><rect x="276" y="384" width="1" height="1"/><rect x="276" y="355" width="1" height="1"/><rect x="276" y="327" width="1" height="1"/><rect x="276" y="298" width="1" height="1"/><rect x="276" y="270" width="1" height="1"/><rect x="276" y="241" width="1" height="1"/><rect x="276" y="213" width="1" height="1"/><rect x="276" y="184" width="1" height="1"/><rect x="305" y="726" width="1" height="1"/><rect x="305" y="698" width="1" height="1"/><rect x="305" y="669" width="1" height="1"/><rect x="305" y="641" width="1" height="1"/><rect x="305" y="612" width="1" height="1"/><rect x="305" y="584" width="1" height="1"/><rect x="305" y="555" width="1" height="1"/><rect x="305" y="527" width="1" height="1"/><rect x="305" y="498" width="1" height="1"/><rect x="305" y="470" width="1" height="1"/><rect x="305" y="441" width="1" height="1"/><rect x="305" y="413" width="1" height="1"/><rect x="305" y="384" width="1" height="1"/><rect x="305" y="355" width="1" height="1"/><rect x="305" y="327" width="1" height="1"/><rect x="305" y="298" width="1" height="1"/><rect x="305" y="270" width="1" height="1"/><rect x="305" y="241" width="1" height="1"/><rect x="305" y="213" width="1" height="1"/><rect x="305" y="184" width="1" height="1"/><rect x="333" y="726" width="1" height="1"/><rect x="333" y="698" width="1" height="1"/><rect x="333" y="669" width="1" height="1"/><rect x="333" y="641" width="1" height="1"/><rect x="333" y="612" width="1" height="1"/><rect x="333" y="584" width="1" height="1"/><rect x="333" y="555" width="1" height="1"/><rect x="333" y="527" width="1" height="1"/><rect x="333" y="498" width="1" height="1"/><rect x="333" y="470" width="1" height="1"/><rect x="333" y="441" width="1" height="1"/><rect x="333" y="413" width="1" height="1"/><rect x="333" y="384" width="1" height="1"/><rect x="333" y="355" width="1" height="1"/><rect x="333" y="327" width="1" height="1"/><rect x="333" y="298" width="1" height="1"/><rect x="333" y="270" width="1" height="1"/><rect x="333" y="241" width="1" height="1"/><rect x="333" y="213" width="1" height="1"/><rect x="333" y="184" width="1" height="1"/><rect x="362" y="726" width="1" height="1"/><rect x="362" y="698" width="1" height="1"/><rect x="362" y="669" width="1" height="1"/><rect x="362" y="641" width="1" height="1"/><rect x="362" y="612" width="1" height="1"/><rect x="362" y="584" width="1" height="1"/><rect x="362" y="555" width="1" height="1"/><rect x="362" y="527" width="1" height="1"/><rect x="362" y="498" width="1" height="1"/><rect x="362" y="470" width="1" height="1"/><rect x="362" y="441" width="1" height="1"/><rect x="362" y="413" width="1" height="1"/><rect x="362" y="384" width="1" height="1"/><rect x="362" y="355" width="1" height="1"/><rect x="362" y="327" width="1" height="1"/><rect x="362" y="298" width="1" height="1"/><rect x="362" y="270" width="1" height="1"/><rect x="362" y="241" width="1" height="1"/><rect x="362" y="213" width="1" height="1"/><rect x="362" y="184" width="1" height="1"/><rect x="390" y="726" width="1" height="1"/><rect x="390" y="698" width="1" height="1"/><rect x="390" y="669" width="1" height="1"/><rect x="390" y="641" width="1" height="1"/><rect x="390" y="612" width="1" height="1"/><rect x="390" y="584" width="1" height="1"/><rect x="390" y="555" width="1" height="1"/><rect x="390" y="527" width="1" height="1"/><rect x="390" y="498" width="1" height="1"/><rect x="390" y="470" width="1" height="1"/><rect x="390" y="441" width="1" height="1"/><rect x="390" y="413" width="1" height="1"/><rect x="390" y="384" width="1" height="1"/><rect x="390" y="355" width="1" height="1"/><rect x="390" y="327" width="1" height="1"/><rect x="390" y="298" width="1" height="1"/><rect x="390" y="270" width="1" height="1"/><rect x="390" y="241" width="1" height="1"/><rect x="390" y="213" width="1" height="1"/><rect x="390" y="184" width="1" height="1"/><rect x="419" y="726" width="1" height="1"/><rect x="419" y="698" width="1" height="1"/><rect x="419" y="669" width="1" height="1"/><rect x="419" y="641" width="1" height="1"/><rect x="419" y="612" width="1" height="1"/><rect x="419" y="584" width="1" height="1"/><rect x="419" y="555" width="1" height="1"/><rect x="419" y="527" width="1" height="1"/><rect x="419" y="498" width="1" height="1"/><rect x="419" y="470" width="1" height="1"/><rect x="419" y="441" width="1" height="1"/><rect x="419" y="413" width="1" height="1"/><rect x="419" y="384" width="1" height="1"/><rect x="419" y="355" width="1" height="1"/><rect x="419" y="327" width="1" height="1"/><rect x="419" y="298" width="1" height="1"/><rect x="419" y="270" width="1" height="1"/><rect x="419" y="241" width="1" height="1"/><rect x="419" y="213" width="1" height="1"/><rect x="419" y="184" width="1" height="1"/><rect x="447" y="726" width="1" height="1"/><rect x="447" y="698" width="1" height="1"/><rect x="447" y="669" width="1" height="1"/><rect x="447" y="641" width="1" height="1"/><rect x="447" y="612" width="1" height="1"/><rect x="447" y="584" width="1" height="1"/><rect x="447" y="555" width="1" height="1"/><rect x="447" y="527" width="1" height="1"/><rect x="447" y="498" width="1" height="1"/><rect x="447" y="470" width="1" height="1"/><rect x="447" y="441" width="1" height="1"/><rect x="447" y="413" width="1" height="1"/><rect x="447" y="384" width="1" height="1"/><rect x="447" y="355" width="1" height="1"/><rect x="447" y="327" width="1" height="1"/><rect x="447" y="298" width="1" height="1"/><rect x="447" y="270" width="1" height="1"/><rect x="447" y="241" width="1" height="1"/><rect x="447" y="213" width="1" height="1"/><rect x="447" y="184" width="1" height="1"/><rect x="476" y="726" width="1" height="1"/><rect x="476" y="698" width="1" height="1"/><rect x="476" y="669" width="1" height="1"/><rect x="476" y="641" width="1" height="1"/><rect x="476" y="612" width="1" height="1"/><rect x="476" y="584" width="1" height="1"/><rect x="476" y="555" width="1" height="1"/><rect x="476" y="527" width="1" height="1"/><rect x="476" y="498" width="1" height="1"/><rect x="476" y="470" width="1" height="1"/><rect x="476" y="441" width="1" height="1"/><rect x="476" y="413" width="1" height="1"/><rect x="476" y="384" width="1" height="1"/><rect x="476" y="355" width="1" height="1"/><rect x="476" y="327" width="1" height="1"/><rect x="476" y="298" width="1" height="1"/><rect x="476" y="270" width="1" height="1"/><rect x="476" y="241" width="1" height="1"/><rect x="476" y="213" width="1" height="1"/><rect x="476" y="184" width="1" height="1"/><rect x="504" y="726" width="1" height="1"/><rect x="504" y="698" width="1" height="1"/><rect x="504" y="669" width="1" height="1"/><rect x="504" y="641" width="1" height="1"/><rect x="504" y="612" width="1" height="1"/><rect x="504" y="584" width="1" height="1"/><rect x="504" y="555" width="1" height="1"/><rect x="504" y="527" width="1" height="1"/><rect x="504" y="498" width="1" height="1"/><rect x="504" y="470" width="1" height="1"/><rect x="504" y="441" width="1" height="1"/><rect x="504" y="413" width="1" height="1"/><rect x="504" y="384" width="1" height="1"/><rect x="504" y="355" width="1" height="1"/><rect x="504" y="327" width="1" height="1"/><rect x="504" y="298" width="1" height="1"/><rect x="504" y="270" width="1" height="1"/><rect x="504" y="241" width="1" height="1"/><rect x="504" y="213" width="1" height="1"/><rect x="504" y="184" width="1" height="1"/><rect x="533" y="726" width="1" height="1"/><rect x="533" y="698" width="1" height="1"/><rect x="533" y="669" width="1" height="1"/><rect x="533" y="641" width="1" height="1"/><rect x="533" y="612" width="1" height="1"/><rect x="533" y="584" width="1" height="1"/><rect x="533" y="555" width="1" height="1"/><rect x="533" y="527" width="1" height="1"/><rect x="533" y="498" width="1" height="1"/><rect x="533" y="470" width="1" height="1"/><rect x="533" y="441" width="1" height="1"/><rect x="533" y="413" width="1" height="1"/><rect x="533" y="384" width="1" height="1"/><rect x="533" y="355" width="1" height="1"/><rect x="533" y="327" width="1" height="1"/><rect x="533" y="298" width="1" height="1"/><rect x="533" y="270" width="1" height="1"/><rect x="533" y="241" width="1" height="1"/><rect x="533" y="213" width="1" height="1"/><rect x="533" y="184" width="1" height="1"/><rect x="561" y="726" width="1" height="1"/><rect x="561" y="698" width="1" height="1"/><rect x="561" y="669" width="1" height="1"/><rect x="561" y="641" width="1" height="1"/><rect x="561" y="612" width="1" height="1"/><rect x="561" y="584" width="1" height="1"/><rect x="561" y="555" width="1" height="1"/><rect x="561" y="527" width="1" height="1"/><rect x="561" y="498" width="1" height="1"/><rect x="561" y="470" width="1" height="1"/><rect x="561" y="441" width="1" height="1"/><rect x="561" y="413" width="1" height="1"/><rect x="561" y="384" width="1" height="1"/><rect x="561" y="355" width="1" height="1"/><rect x="561" y="327" width="1" height="1"/><rect x="561" y="298" width="1" height="1"/><rect x="561" y="270" width="1" height="1"/><rect x="561" y="241" width="1" height="1"/><rect x="561" y="213" width="1" height="1"/><rect x="561" y="184" width="1" height="1"/><rect x="590" y="726" width="1" height="1"/><rect x="590" y="698" width="1" height="1"/><rect x="590" y="669" width="1" height="1"/><rect x="590" y="641" width="1" height="1"/><rect x="590" y="612" width="1" height="1"/><rect x="590" y="584" width="1" height="1"/><rect x="590" y="555" width="1" height="1"/><rect x="590" y="527" width="1" height="1"/><rect x="590" y="498" width="1" height="1"/><rect x="590" y="470" width="1" height="1"/><rect x="590" y="441" width="1" height="1"/><rect x="590" y="413" width="1" height="1"/><rect x="590" y="384" width="1" height="1"/><rect x="590" y="355" width="1" height="1"/><rect x="590" y="327" width="1" height="1"/><rect x="590" y="298" width="1" height="1"/><rect x="590" y="270" width="1" height="1"/><rect x="590" y="241" width="1" height="1"/><rect x="590" y="213" width="1" height="1"/><rect x="590" y="184" width="1" height="1"/><rect x="618" y="726" width="1" height="1"/><rect x="618" y="698" width="1" height="1"/><rect x="618" y="669" width="1" height="1"/><rect x="618" y="641" width="1" height="1"/><rect x="618" y="612" width="1" height="1"/><rect x="618" y="584" width="1" height="1"/><rect x="618" y="555" width="1" height="1"/><rect x="618" y="527" width="1" height="1"/><rect x="618" y="498" width="1" height="1"/><rect x="618" y="470" width="1" height="1"/><rect x="618" y="441" width="1" height="1"/><rect x="618" y="413" width="1" height="1"/><rect x="618" y="384" width="1" height="1"/><rect x="618" y="355" width="1" height="1"/><rect x="618" y="327" width="1" height="1"/><rect x="618" y="298" width="1" height="1"/><rect x="618" y="270" width="1" height="1"/><rect x="618" y="241" width="1" height="1"/><rect x="618" y="213" width="1" height="1"/><rect x="618" y="184" width="1" height="1"/><rect x="647" y="726" width="1" height="1"/><rect x="647" y="698" width="1" height="1"/><rect x="647" y="669" width="1" height="1"/><rect x="647" y="641" width="1" height="1"/><rect x="647" y="612" width="1" height="1"/><rect x="647" y="584" width="1" height="1"/><rect x="647" y="555" width="1" height="1"/><rect x="647" y="527" width="1" height="1"/><rect x="647" y="498" width="1" height="1"/><rect x="647" y="470" width="1" height="1"/><rect x="647" y="441" width="1" height="1"/><rect x="647" y="413" width="1" height="1"/><rect x="647" y="384" width="1" height="1"/><rect x="647" y="355" width="1" height="1"/><rect x="647" y="327" width="1" height="1"/><rect x="647" y="298" width="1" height="1"/><rect x="647" y="270" width="1" height="1"/><rect x="647" y="241" width="1" height="1"/><rect x="647" y="213" width="1" height="1"/><rect x="647" y="184" width="1" height="1"/><rect x="675" y="726" width="1" height="1"/><rect x="675" y="698" width="1" height="1"/><rect x="675" y="669" width="1" height="1"/><rect x="675" y="641" width="1" height="1"/><rect x="675" y="612" width="1" height="1"/><rect x="675" y="584" width="1" height="1"/><rect x="675" y="555" width="1" height="1"/><rect x="675" y="527" width="1" height="1"/><rect x="675" y="498" width="1" height="1"/><rect x="675" y="470" width="1" height="1"/><rect x="675" y="441" width="1" height="1"/><rect x="675" y="413" width="1" height="1"/><rect x="675" y="384" width="1" height="1"/><rect x="675" y="355" width="1" height="1"/><rect x="675" y="327" width="1" height="1"/><rect x="675" y="298" width="1" height="1"/><rect x="675" y="270" width="1" height="1"/><rect x="675" y="241" width="1" height="1"/><rect x="675" y="213" width="1" height="1"/><rect x="675" y="184" width="1" height="1"/><rect x="704" y="726" width="1" height="1"/><rect x="704" y="698" width="1" height="1"/><rect x="704" y="669" width="1" height="1"/><rect x="704" y="641" width="1" height="1"/><rect x="704" y="612" width="1" height="1"/><rect x="704" y="584" width="1" height="1"/><rect x="704" y="555" width="1" height="1"/><rect x="704" y="527" width="1" height="1"/><rect x="704" y="498" width="1" height="1"/><rect x="704" y="470" width="1" height="1"/><rect x="704" y="441" width="1" height="1"/><rect x="704" y="413" width="1" height="1"/><rect x="704" y="384" width="1" height="1"/><rect x="704" y="355" width="1" height="1"/><rect x="704" y="327" width="1" height="1"/><rect x="704" y="298" width="1" height="1"/><rect x="704" y="270" width="1" height="1"/><rect x="704" y="241" width="1" height="1"/><rect x="704" y="213" width="1" height="1"/><rect x="704" y="184" width="1" height="1"/><rect x="732" y="726" width="1" height="1"/><rect x="732" y="698" width="1" height="1"/><rect x="732" y="669" width="1" height="1"/><rect x="732" y="641" width="1" height="1"/><rect x="732" y="612" width="1" height="1"/><rect x="732" y="584" width="1" height="1"/><rect x="732" y="555" width="1" height="1"/><rect x="732" y="527" width="1" height="1"/><rect x="732" y="498" width="1" height="1"/><rect x="732" y="470" width="1" height="1"/><rect x="732" y="441" width="1" height="1"/><rect x="732" y="413" width="1" height="1"/><rect x="732" y="384" width="1" height="1"/><rect x="732" y="355" width="1" height="1"/><rect x="732" y="327" width="1" height="1"/><rect x="732" y="298" width="1" height="1"/><rect x="732" y="270" width="1" height="1"/><rect x="732" y="241" width="1" height="1"/><rect x="732" y="213" width="1" height="1"/><rect x="732" y="184" width="1" height="1"/><rect x="761" y="726" width="1" height="1"/><rect x="761" y="698" width="1" height="1"/><rect x="761" y="669" width="1" height="1"/><rect x="761" y="641" width="1" height="1"/><rect x="761" y="612" width="1" height="1"/><rect x="761" y="584" width="1" height="1"/><rect x="761" y="555" width="1" height="1"/><rect x="761" y="527" width="1" height="1"/><rect x="761" y="498" width="1" height="1"/><rect x="761" y="470" width="1" height="1"/><rect x="761" y="441" width="1" height="1"/><rect x="761" y="413" width="1" height="1"/><rect x="761" y="384" width="1" height="1"/><rect x="761" y="355" width="1" height="1"/><rect x="761" y="327" width="1" height="1"/><rect x="761" y="298" width="1" height="1"/><rect x="761" y="270" width="1" height="1"/><rect x="761" y="241" width="1" height="1"/><rect x="761" y="213" width="1" height="1"/><rect x="761" y="184" width="1" height="1"/><rect x="789" y="726" width="1" height="1"/><rect x="789" y="698" width="1" height="1"/><rect x="789" y="669" width="1" height="1"/><rect x="789" y="641" width="1" height="1"/><rect x="789" y="612" width="1" height="1"/><rect x="789" y="584" width="1" height="1"/><rect x="789" y="555" width="1" height="1"/><rect x="789" y="527" width="1" height="1"/><rect x="789" y="498" width="1" height="1"/><rect x="789" y="470" width="1" height="1"/><rect x="789" y="441" width="1" height="1"/><rect x="789" y="413" width="1" height="1"/><rect x="789" y="384" width="1" height="1"/><rect x="789" y="355" width="1" height="1"/><rect x="789" y="327" width="1" height="1"/><rect x="789" y="298" width="1" height="1"/><rect x="789" y="270" width="1" height="1"/><rect x="789" y="241" width="1" height="1"/><rect x="789" y="213" width="1" height="1"/><rect x="789" y="184" width="1" height="1"/><rect x="818" y="726" width="1" height="1"/><rect x="818" y="698" width="1" height="1"/><rect x="818" y="669" width="1" height="1"/><rect x="818" y="641" width="1" height="1"/><rect x="818" y="612" width="1" height="1"/><rect x="818" y="584" width="1" height="1"/><rect x="818" y="555" width="1" height="1"/><rect x="818" y="527" width="1" height="1"/><rect x="818" y="498" width="1" height="1"/><rect x="818" y="470" width="1" height="1"/><rect x="818" y="441" width="1" height="1"/><rect x="818" y="413" width="1" height="1"/><rect x="818" y="384" width="1" height="1"/><rect x="818" y="355" width="1" height="1"/><rect x="818" y="327" width="1" height="1"/><rect x="818" y="298" width="1" height="1"/><rect x="818" y="270" width="1" height="1"/><rect x="818" y="241" width="1" height="1"/><rect x="818" y="213" width="1" height="1"/><rect x="818" y="184" width="1" height="1"/><rect x="846" y="726" width="1" height="1"/><rect x="846" y="698" width="1" height="1"/><rect x="846" y="669" width="1" height="1"/><rect x="846" y="641" width="1" height="1"/><rect x="846" y="612" width="1" height="1"/><rect x="846" y="584" width="1" height="1"/><rect x="846" y="555" width="1" height="1"/><rect x="846" y="527" width="1" height="1"/><rect x="846" y="498" width="1" height="1"/><rect x="846" y="470" width="1" height="1"/><rect x="846" y="441" width="1" height="1"/><rect x="846" y="413" width="1" height="1"/><rect x="846" y="384" width="1" height="1"/><rect x="846" y="355" width="1" height="1"/><rect x="846" y="327" width="1" height="1"/><rect x="846" y="298" width="1" height="1"/><rect x="846" y="270" width="1" height="1"/><rect x="846" y="241" width="1" height="1"/><rect x="846" y="213" width="1" height="1"/><rect x="846" y="184" width="1" height="1"/><rect x="875" y="726" width="1" height="1"/><rect x="875" y="698" width="1" height="1"/><rect x="875" y="669" width="1" height="1"/><rect x="875" y="641" width="1" height="1"/><rect x="875" y="612" width="1" height="1"/><rect x="875" y="584" width="1" height="1"/><rect x="875" y="555" width="1" height="1"/><rect x="875" y="527" width="1" height="1"/><rect x="875" y="498" width="1" height="1"/><rect x="875" y="470" width="1" height="1"/><rect x="875" y="441" width="1" height="1"/><rect x="875" y="413" width="1" height="1"/><rect x="875" y="384" width="1" height="1"/><rect x="875" y="355" width="1" height="1"/><rect x="875" y="327" width="1" height="1"/><rect x="875" y="298" width="1" height="1"/><rect x="875" y="270" width="1" height="1"/><rect x="875" y="241" width="1" height="1"/><rect x="875" y="213" width="1" height="1"/><rect x="875" y="184" width="1" height="1"/><rect x="904" y="726" width="1" height="1"/><rect x="904" y="698" width="1" height="1"/><rect x="904" y="669" width="1" height="1"/><rect x="904" y="641" width="1" height="1"/><rect x="904" y="612" width="1" height="1"/><rect x="904" y="584" width="1" height="1"/><rect x="904" y="555" width="1" height="1"/><rect x="904" y="527" width="1" height="1"/><rect x="904" y="498" width="1" height="1"/><rect x="904" y="470" width="1" height="1"/><rect x="904" y="441" width="1" height="1"/><rect x="904" y="413" width="1" height="1"/><rect x="904" y="384" width="1" height="1"/><rect x="904" y="355" width="1" height="1"/><rect x="904" y="327" width="1" height="1"/><rect x="904" y="298" width="1" height="1"/><rect x="904" y="270" width="1" height="1"/><rect x="904" y="241" width="1" height="1"/><rect x="904" y="213" width="1" height="1"/><rect x="904" y="184" width="1" height="1"/><rect x="932" y="726" width="1" height="1"/><rect x="932" y="698" width="1" height="1"/><rect x="932" y="669" width="1" height="1"/><rect x="932" y="641" width="1" height="1"/><rect x="932" y="612" width="1" height="1"/><rect x="932" y="584" width="1" height="1"/><rect x="932" y="555" width="1" height="1"/><rect x="932" y="527" width="1" height="1"/><rect x="932" y="498" width="1" height="1"/><rect x="932" y="470" width="1" height="1"/><rect x="932" y="441" width="1" height="1"/><rect x="932" y="413" width="1" height="1"/><rect x="932" y="384" width="1" height="1"/><rect x="932" y="355" width="1" height="1"/><rect x="932" y="327" width="1" height="1"/><rect x="932" y="298" width="1" height="1"/><rect x="932" y="270" width="1" height="1"/><rect x="932" y="241" width="1" height="1"/><rect x="932" y="213" width="1" height="1"/><rect x="932" y="184" width="1" height="1"/><rect x="961" y="726" width="1" height="1"/><rect x="961" y="698" width="1" height="1"/><rect x="961" y="669" width="1" height="1"/><rect x="961" y="641" width="1" height="1"/><rect x="961" y="612" width="1" height="1"/><rect x="961" y="584" width="1" height="1"/><rect x="961" y="555" width="1" height="1"/><rect x="961" y="527" width="1" height="1"/><rect x="961" y="498" width="1" height="1"/><rect x="961" y="470" width="1" height="1"/><rect x="961" y="441" width="1" height="1"/><rect x="961" y="413" width="1" height="1"/><rect x="961" y="384" width="1" height="1"/><rect x="961" y="355" width="1" height="1"/><rect x="961" y="327" width="1" height="1"/><rect x="961" y="298" width="1" height="1"/><rect x="961" y="270" width="1" height="1"/><rect x="961" y="241" width="1" height="1"/><rect x="961" y="213" width="1" height="1"/><rect x="961" y="184" width="1" height="1"/><rect x="989" y="726" width="1" height="1"/><rect x="989" y="698" width="1" height="1"/><rect x="989" y="669" width="1" height="1"/><rect x="989" y="641" width="1" height="1"/><rect x="989" y="612" width="1" height="1"/><rect x="989" y="584" width="1" height="1"/><rect x="989" y="555" width="1" height="1"/><rect x="989" y="527" width="1" height="1"/><rect x="989" y="498" width="1" height="1"/><rect x="989" y="470" width="1" height="1"/><rect x="989" y="441" width="1" height="1"/><rect x="989" y="413" width="1" height="1"/><rect x="989" y="384" width="1" height="1"/><rect x="989" y="355" width="1" height="1"/><rect x="989" y="327" width="1" height="1"/><rect x="989" y="298" width="1" height="1"/><rect x="989" y="270" width="1" height="1"/><rect x="989" y="241" width="1" height="1"/><rect x="989" y="213" width="1" height="1"/><rect x="989" y="184" width="1" height="1"/><rect x="1018" y="726" width="1" height="1"/><rect x="1018" y="698" width="1" height="1"/><rect x="1018" y="669" width="1" height="1"/><rect x="1018" y="641" width="1" height="1"/><rect x="1018" y="612" width="1" height="1"/><rect x="1018" y="584" width="1" height="1"/><rect x="1018" y="555" width="1" height="1"/><rect x="1018" y="527" width="1" height="1"/><rect x="1018" y="498" width="1" height="1"/><rect x="1018" y="470" width="1" height="1"/><rect x="1018" y="441" width="1" height="1"/><rect x="1018" y="413" width="1" height="1"/><rect x="1018" y="384" width="1" height="1"/><rect x="1018" y="355" width="1" height="1"/><rect x="1018" y="327" width="1" height="1"/><rect x="1018" y="298" width="1" height="1"/><rect x="1018" y="270" width="1" height="1"/><rect x="1018" y="241" width="1" height="1"/><rect x="1018" y="213" width="1" height="1"/><rect x="1018" y="184" width="1" height="1"/><rect x="1046" y="726" width="1" height="1"/><rect x="1046" y="698" width="1" height="1"/><rect x="1046" y="669" width="1" height="1"/><rect x="1046" y="641" width="1" height="1"/><rect x="1046" y="612" width="1" height="1"/><rect x="1046" y="584" width="1" height="1"/><rect x="1046" y="555" width="1" height="1"/><rect x="1046" y="527" width="1" height="1"/><rect x="1046" y="498" width="1" height="1"/><rect x="1046" y="470" width="1" height="1"/><rect x="1046" y="441" width="1" height="1"/><rect x="1046" y="413" width="1" height="1"/><rect x="1046" y="384" width="1" height="1"/><rect x="1046" y="355" width="1" height="1"/><rect x="1046" y="327" width="1" height="1"/><rect x="1046" y="298" width="1" height="1"/><rect x="1046" y="270" width="1" height="1"/><rect x="1046" y="241" width="1" height="1"/><rect x="1046" y="213" width="1" height="1"/><rect x="1046" y="184" width="1" height="1"/><rect x="1075" y="726" width="1" height="1"/><rect x="1075" y="698" width="1" height="1"/><rect x="1075" y="669" width="1" height="1"/><rect x="1075" y="641" width="1" height="1"/><rect x="1075" y="612" width="1" height="1"/><rect x="1075" y="584" width="1" height="1"/><rect x="1075" y="555" width="1" height="1"/><rect x="1075" y="527" width="1" height="1"/><rect x="1075" y="498" width="1" height="1"/><rect x="1075" y="470" width="1" height="1"/><rect x="1075" y="441" width="1" height="1"/><rect x="1075" y="413" width="1" height="1"/><rect x="1075" y="384" width="1" height="1"/><rect x="1075" y="355" width="1" height="1"/><rect x="1075" y="327" width="1" height="1"/><rect x="1075" y="298" width="1" height="1"/><rect x="1075" y="270" width="1" height="1"/><rect x="1075" y="241" width="1" height="1"/><rect x="1075" y="213" width="1" height="1"/><rect x="1075" y="184" width="1" height="1"/><rect x="1103" y="726" width="1" height="1"/><rect x="1103" y="698" width="1" height="1"/><rect x="1103" y="669" width="1" height="1"/><rect x="1103" y="641" width="1" height="1"/><rect x="1103" y="612" width="1" height="1"/><rect x="1103" y="584" width="1" height="1"/><rect x="1103" y="555" width="1" height="1"/><rect x="1103" y="527" width="1" height="1"/><rect x="1103" y="498" width="1" height="1"/><rect x="1103" y="470" width="1" height="1"/><rect x="1103" y="441" width="1" height="1"/><rect x="1103" y="413" width="1" height="1"/><rect x="1103" y="384" width="1" height="1"/><rect x="1103" y="355" width="1" height="1"/><rect x="1103" y="327" width="1" height="1"/><rect x="1103" y="298" width="1" height="1"/><rect x="1103" y="270" width="1" height="1"/><rect x="1103" y="241" width="1" height="1"/><rect x="1103" y="213" width="1" height="1"/><rect x="1103" y="184" width="1" height="1"/><rect x="1132" y="726" width="1" height="1"/><rect x="1132" y="698" width="1" height="1"/><rect x="1132" y="669" width="1" height="1"/><rect x="1132" y="641" width="1" height="1"/><rect x="1132" y="612" width="1" height="1"/><rect x="1132" y="584" width="1" height="1"/><rect x="1132" y="555" width="1" height="1"/><rect x="1132" y="527" width="1" height="1"/><rect x="1132" y="498" width="1" height="1"/><rect x="1132" y="470" width="1" height="1"/><rect x="1132" y="441" width="1" height="1"/><rect x="1132" y="413" width="1" height="1"/><rect x="1132" y="384" width="1" height="1"/><rect x="1132" y="355" width="1" height="1"/><rect x="1132" y="327" width="1" height="1"/><rect x="1132" y="298" width="1" height="1"/><rect x="1132" y="270" width="1" height="1"/><rect x="1132" y="241" width="1" height="1"/><rect x="1132" y="213" width="1" height="1"/><rect x="1132" y="184" width="1" height="1"/></g></svg><div class="a" style="left:1139px;top:170px;width:14px;height:562px;background:#f8f8f8"></div><div class="a" style="left:1143px;top:316px;width:8px;height:268px;background:#838383;border-radius:4px"></div><div class="a" style="left:95px;top:732px;width:988px;height:14px;background:#f8f8f8"></div><div class="a" style="left:214px;top:736px;width:749px;height:8px;background:#838383;border-radius:4px"></div><div class="a" style="left:1083px;top:732px;width:70px;height:14px;background:#ececec"></div><span class="t" style="left:1103px;top:734px;font-size:13px;color:#111">10 &lt; 100</span>
<svg style="left:95px;top:170px" width="1044" height="562" viewBox="95 170 1044 562"><g fill="none" stroke="#dcdcdc" stroke-width="0.9" stroke-linejoin="round"><polyline points="333.3,290.8 350.0,291.7 350.8,286.3 359.2,286.3 370.0,288.7"/><polyline points="361.7,270.0 359.2,286.3"/><polyline points="333.3,298.3 338.3,298.7 337.5,308.3 333.3,308.3"/><polyline points="347.5,299.7 346.3,309.2"/><polyline points="347.5,299.7 433.3,308.7 438.3,311.7 440.0,318.3"/><polyline points="333.3,308.3 388.3,313.3 389.2,314.2 421.7,316.7"/><polyline points="421.7,316.7 412.5,338.3 410.3,351.7 395.0,400.0"/><polyline points="398.3,346.7 410.8,350.8"/><polyline points="398.3,346.7 384.2,385.0"/><polyline points="385.0,355.0 408.3,357.5"/><polyline points="385.0,355.0 380.8,385.0"/><polyline points="390.8,369.2 402.5,372.5"/><polyline points="384.2,385.0 396.7,389.2"/><polyline points="409.2,355.0 417.0,360.8"/><polyline points="333.3,379.2 380.8,385.0"/><polyline points="510.8,270.0 510.0,274.2 565.0,280.8"/><polyline points="509.2,280.0 507.5,301.7 565.0,309.2"/><polyline points="509.2,280.0 565.0,287.5"/><polyline points="505.0,307.5 503.3,318.3"/><polyline points="505.0,307.5 565.0,314.2"/><polyline points="485.5,280.7 497.8,281.2 492.0,307.3 492.5,318.0"/><polyline points="481.3,306.2 492.0,307.3"/><polyline points="485.0,289.0 495.7,290.2"/><polyline points="496.7,270.0 504.2,270.8"/><polyline points="472.5,315.8 470.8,334.2"/><polyline points="467.5,335.0 565.0,345.8"/><polyline points="468.3,338.3 558.3,347.5 557.5,354.2 565.0,355.0"/><polyline points="536.7,327.5 534.2,341.7"/><polyline points="536.7,327.5 565.0,330.0"/><polyline points="438.3,345.8 451.7,340.0 454.2,335.8 461.7,336.7 460.0,355.0"/><polyline points="468.0,337.0 465.0,355.8"/><polyline points="448.3,354.2 485.0,358.3 481.7,384.2"/><polyline points="448.3,354.2 445.8,364.2 444.2,379.2 433.3,378.3 431.7,393.3"/><polyline points="433.3,378.3 481.7,384.2 565.0,393.3"/><polyline points="518.3,361.7 555.0,365.8 550.8,393.3"/><polyline points="518.3,361.7 515.0,373.3 512.5,387.5"/><polyline points="349.2,406.7 403.3,411.7"/><polyline points="349.2,406.7 346.7,439.7 376.7,442.5 375.8,451.7 398.3,453.3"/><polyline points="349.2,414.2 380.0,416.7 376.7,442.5"/><polyline points="354.2,440.8 353.3,447.5 368.3,448.3 369.2,441.7"/><polyline points="405.8,462.5 421.7,463.3 421.7,466.7 486.7,470.0 489.2,483.3"/><polyline points="405.8,462.5 405.0,490.8 441.7,493.3 442.5,468.3"/><polyline points="333.3,487.5 385.0,495.0"/><polyline points="404.7,492.5 408.3,501.7 425.0,508.3 428.3,510.0 443.3,508.3 448.3,504.2 475.0,493.3 565.0,472.0"/><polyline points="425.0,506.7 428.3,503.3 441.7,503.3 444.2,506.7 441.7,510.0 428.3,510.0 425.0,506.7"/><polyline points="543.3,492.5 548.3,506.7 525.0,505.0 521.7,530.0"/><polyline points="552.5,504.2 560.0,505.0 559.2,509.2 552.5,508.3 552.5,504.2"/><polyline points="395.0,510.0 418.3,516.7 431.7,526.7 441.7,541.7 455.0,563.3"/><polyline points="455.0,562.5 448.3,568.3 411.7,571.7 378.3,601.7 378.3,619.2"/><polyline points="411.7,571.7 408.3,590.8 406.7,619.2"/><polyline points="408.3,590.8 444.2,595.8 440.0,616.7 447.5,618.3"/><polyline points="411.7,589.2 445.0,593.3"/><polyline points="408.3,610.8 425.8,615.0 425.8,619.2"/><polyline points="447.5,618.3 451.7,590.0 460.0,580.8 468.3,581.7"/><polyline points="492.5,590.8 491.7,585.8 498.3,578.3 565.0,581.7"/><polyline points="523.3,505.0 520.8,530.8 557.5,535.8 558.3,523.3 565.0,524.2"/><polyline points="523.3,505.0 548.3,507.5 546.7,500.0"/><polyline points="551.7,503.3 560.0,504.2 559.2,509.2 551.7,508.3 551.7,503.3"/><polyline points="520.8,535.0 535.8,537.5 534.2,546.7 519.2,544.2 520.8,535.0"/><polyline points="571.4,606.5 572.7,616.6 577.7,617.9 587.9,616.6 608.1,618.4"/><polyline points="587.9,606.5 587.9,616.6"/><polyline points="666.4,606.5 665.1,617.9"/><polyline points="672.7,606.5 671.5,617.9"/><polyline points="695.5,606.5 698.1,614.1 705.7,615.3 709.5,606.5"/><polyline points="731.0,607.7 724.7,617.9"/><polyline points="728.5,607.7 723.4,617.9"/><polyline points="760.2,607.7 760.2,617.9"/><polyline points="776.6,606.5 776.6,617.9"/><polyline points="884.3,617.4 898.2,618.4"/><polyline points="433.5,380.0 430.3,405.6 432.4,406.1 430.8,417.3 447.3,420.5 453.7,419.5 471.9,421.6 476.1,383.2"/><polyline points="425.5,392.3 431.3,393.3"/><polyline points="425.5,392.3 422.3,416.3 430.8,417.3"/><polyline points="447.3,420.5 446.3,426.9"/><polyline points="412.1,423.2 445.2,426.9 477.2,431.2"/><polyline points="411.1,428.5 478.3,433.3 546.5,438.7"/><polyline points="476.1,389.1 491.1,390.7 490.5,399.2 485.2,398.7 481.5,431.2"/><polyline points="475.6,393.9 480.9,394.9 477.2,431.2"/><polyline points="482.5,380.0 482.0,384.3"/><polyline points="513.5,380.0 512.4,386.9"/><polyline points="502.8,386.4 499.6,414.1 500.7,426.4 522.0,428.5 523.1,429.6 540.7,429.6 545.5,392.8"/><polyline points="500.7,400.3 494.8,399.7 492.1,423.7 500.7,425.3"/><polyline points="516.7,429.1 516.1,435.5"/><polyline points="552.9,380.0 551.3,392.8"/><polyline points="546.0,397.1 561.5,398.7 560.4,407.2 555.1,406.1 551.9,438.7"/><polyline points="545.5,401.9 550.3,402.9 547.6,438.7"/><polyline points="564.7,408.8 562.0,432.3 565.7,432.8"/><polyline points="545.5,392.8 565.7,393.9"/></g><g fill="none" stroke="#1cc8da" stroke-width="1" stroke-linejoin="round"><polyline points="372.5,270.0 370.0,294.2"/><polyline points="370.0,294.2 449.7,303.0"/><polyline points="467.5,270.0 449.7,303.0 440.0,318.3 425.0,346.7 418.3,360.0 411.7,370.0 407.8,381.7 405.0,400.0"/><polyline points="453.3,317.5 440.0,338.3 430.0,356.7 423.3,373.3 418.3,386.7 415.0,400.0"/><polyline points="485.3,270.0 479.2,315.8"/><polyline points="458.3,315.0 565.0,326.7"/><polyline points="333.3,390.8 405.0,399.2"/><polyline points="393.3,397.5 392.0,411.7 403.3,412.8"/><polyline points="407.8,390.0 403.3,423.3 398.3,465.0 395.0,488.3 393.3,491.7 390.0,495.8 385.0,496.7"/><polyline points="418.3,390.0 410.8,430.0 405.8,463.3 404.7,491.7 408.3,498.0"/><polyline points="410.8,430.0 565.0,448.3"/><polyline points="333.3,488.3 386.7,496.7"/><polyline points="407.5,498.3 440.0,498.0 466.7,489.7 565.0,465.8"/><polyline points="333.3,499.2 383.3,508.7"/><polyline points="565.0,486.3 470.0,507.5 459.2,515.8 456.7,523.3 456.3,530.0"/><polyline points="421.3,498.7 450.0,530.0"/><polyline points="400.8,515.0 402.5,619.2"/><polyline points="395.0,510.8 418.3,521.7 440.0,541.7 456.7,564.2 494.2,619.2"/><polyline points="421.7,500.0 456.7,535.8 462.5,546.7 476.7,567.5 512.5,619.2"/><polyline points="456.3,530.0 456.7,535.8"/><polyline points="476.7,567.5 565.0,573.3"/><polyline points="691.2,606.5 689.7,617.9"/><polyline points="783.0,606.5 781.7,617.9"/><polyline points="869.1,606.5 867.8,617.9"/></g><g stroke="#cfcfcf" stroke-width="0.8"><line x1="461.8" y1="339.5" x2="467.5" y2="339.5"/><line x1="461.6" y1="341.9" x2="467.2" y2="341.9"/><line x1="461.3" y1="344.3" x2="467.0" y2="344.3"/><line x1="461.1" y1="346.7" x2="466.8" y2="346.7"/><line x1="460.8" y1="349.1" x2="466.5" y2="349.1"/><line x1="460.6" y1="351.5" x2="466.2" y2="351.5"/><line x1="460.3" y1="353.9" x2="466.0" y2="353.9"/></g><g font-family="Liberation Sans" font-size="9" fill="#d8d820"><text x="390" y="409" textLength="17.0" lengthAdjust="spacingAndGlyphs">1580</text><text x="350" y="465" textLength="17.0" lengthAdjust="spacingAndGlyphs">2546</text><text x="449" y="459" textLength="17.0" lengthAdjust="spacingAndGlyphs">1549</text><text x="489" y="544" textLength="17.0" lengthAdjust="spacingAndGlyphs">1703</text><text x="466" y="618" textLength="17.0" lengthAdjust="spacingAndGlyphs">1953</text><text x="550" y="608" textLength="12.8" lengthAdjust="spacingAndGlyphs">555</text><text transform="translate(406.5,431) rotate(96)" textLength="22" lengthAdjust="spacingAndGlyphs">43506</text></g><g font-family="Liberation Sans" font-size="9" fill="#c02828"><text x="459.5" y="320.5" textLength="33" lengthAdjust="spacingAndGlyphs">256328</text><text x="386" y="517" textLength="37" lengthAdjust="spacingAndGlyphs">32962236</text></g><g font-family="Liberation Sans" font-size="9.5" fill="#cfcfcf"><text transform="translate(423,363) rotate(-60)">Exercitation</text><text transform="translate(473,578) rotate(57)">Minim Veniam</text></g><rect x="450" y="310" width="7" height="7" fill="#3a9ad0"/><rect x="453.5" y="318" width="6" height="6" fill="#1010c0"/><rect x="387.5" y="503.5" width="7" height="7" fill="#3a9ad0"/><rect x="383" y="507" width="6" height="6" fill="#1010c0"/></svg>
<div class="a" style="left:72px;top:746px;width:1082px;height:53px;background:#ececec"></div><div class="a" style="left:72px;top:748px;width:1081px;height:23px;background:#fff;border-top:2px solid #b9b9b9;border-bottom:1px solid #c4c4c4"></div><div class="a" style="left:1139px;top:750px;width:14px;height:20px;background:#f6f6f6"></div><div class="a" style="left:1142px;top:750px;width:8px;height:17px;background:#838383;border-radius:4px"></div><span class="t" style="left:77px;top:751px;font-size:13px;color:#1212dc"><i>Comando:</i> layeradd</span><span class="t" style="left:73px;top:779px;font-size:13px;color:#111">Comando:</span><div class="a" style="left:138px;top:776px;width:989px;height:18px;background:#fff"></div><div class="a" style="left:1127px;top:772px;width:26px;height:26px;background:linear-gradient(#f4f4f4,#e2e2e2);border:1px solid #b4b4b4"></div><div class="a" style="left:1133px;top:780px;width:14px;height:10px;border:1px solid #222;border-top:3px solid #111;background:#fff"></div>
<div class="a" style="left:0;top:798px;width:1500px;height:46px;background:#dcdcdc;border-top:1px solid #d0d0d0"></div><span class="t" style="left:2px;top:808px;font-size:10px;color:#1a1a1a;letter-spacing:0.2px">389.5292,263.0916</span><span class="t" style="left:2px;top:828px;font-size:10px;color:#1a1a1a;letter-spacing:0.2px">@389.5292,263.0916</span><div class="a" style="left:253px;top:802px;width:1px;height:40px;background:#8a8a8a"></div><span class="t" style="left:256px;top:808px;font-size:10px;color:#1a1a1a;letter-spacing:0.2px">470.0534&lt;34°</span><span class="t" style="left:256px;top:828px;font-size:10px;color:#1a1a1a;letter-spacing:0.2px">@470.0534&lt;34°</span><div class="a" style="left:506px;top:819px;width:6px;height:6px;border-radius:50%;background:#c4c4c4"></div><div class="a" style="left:939px;top:819px;width:6px;height:6px;border-radius:50%;background:#c4c4c4"></div><div class="a" style="left:1269px;top:819px;width:6px;height:6px;border-radius:50%;background:#c4c4c4"></div><span class="t" style="left:569px;top:818.5px;font-size:10px;color:#1a1a1a;letter-spacing:0.2px;letter-spacing:0.15px">Seleccionar entidad o región</span><span class="t" style="left:949px;top:812px;font-size:10px;color:#1a1a1a;letter-spacing:0.2px;letter-spacing:0.1px">Las entidades seleccionadas:</span><span class="t" style="left:949px;top:823px;font-size:10px;color:#1a1a1a;letter-spacing:0.2px;letter-spacing:0.1px">10 entidades en 2 capas.</span><svg style="left:715px;top:804px" width="22" height="34" viewBox="0 0 22 34">
<path d="M11,1.5 C5,1.5 2.5,5 2.5,11 L2.5,23 C2.5,29 6,32.5 11,32.5 C16,32.5 19.5,29 19.5,23 L19.5,11 C19.5,5 17,1.5 11,1.5 Z" fill="#fff" stroke="#222" stroke-width="1"/>
<path d="M2.5,14.5 C7,13 15,13 19.5,14.5" fill="none" stroke="#222" stroke-width="0.9"/>
<rect x="9.3" y="4" width="3.4" height="7.5" rx="1.7" fill="#fff" stroke="#222" stroke-width="0.9"/>
</svg>
<div class="a" style="left:1153px;top:123px;width:303px;height:676px;background:#ececec"></div><svg style="left:1155px;top:125px" width="36" height="16" viewBox="0 0 36 16">
<circle cx="9" cy="8" r="6.9" fill="#6b6b6b"/><path d="M6.3,5.3 L11.7,10.7 M11.7,5.3 L6.3,10.7" stroke="#fff" stroke-width="1.8" stroke-linecap="round"/>
<circle cx="27" cy="8" r="6.9" fill="#6b6b6b"/><rect x="25.2" y="4.8" width="5" height="4" fill="none" stroke="#fff" stroke-width="1"/><rect x="23.5" y="6.8" width="5" height="4" fill="#6b6b6b" stroke="#fff" stroke-width="1"/>
</svg><span class="t" style="left:1284px;top:129px;font-size:11px;color:#2a2a2a;letter-spacing:0.45px">Lista de capas</span><div class="a" style="left:1155.3px;top:145.5px;width:59px;height:25.5px;background:linear-gradient(#f9f9f9,#ececec 50%,#e2e2e2);border:1px solid #b2b2b2"></div><div class="a" style="left:1215.5px;top:145.5px;width:59px;height:25.5px;background:linear-gradient(#f9f9f9,#ececec 50%,#e2e2e2);border:1px solid #b2b2b2"></div><div class="a" style="left:1275.6px;top:145px;width:59px;height:27px;background:#b6b6b6;border-radius:5px"></div><div class="a" style="left:1335.7px;top:145.5px;width:59px;height:25.5px;background:linear-gradient(#f9f9f9,#ececec 50%,#e2e2e2);border:1px solid #b2b2b2"></div><div class="a" style="left:1395.7px;top:145.5px;width:59px;height:25.5px;background:linear-gradient(#f9f9f9,#ececec 50%,#e2e2e2);border:1px solid #b2b2b2"></div><svg style="left:0;top:0" width="1500" height="844" viewBox="0 0 1500 844">
<path d="M1177.5,158.5 C1180,153.5 1188,153.5 1192,158.5 C1188,163.5 1180,163.5 1177.5,158.5 Z" fill="#fff" stroke="#000" stroke-width="2.2"/><circle cx="1184.8" cy="158.3" r="3.2" fill="#000"/>
<path d="M1237.5,158.5 C1240,153.5 1248,153.5 1252,158.5 C1248,163.5 1240,163.5 1237.5,158.5 Z" fill="#fff" stroke="#aaa" stroke-width="2.2"/><circle cx="1244.8" cy="158.3" r="3.2" fill="#aaa"/>
<path d="M1302.5,152 h3.6 v4.8 h4.8 v3.6 h-4.8 v4.8 h-3.6 v-4.8 h-4.8 v-3.6 h4.8 Z" fill="#ee0000" stroke="#700" stroke-width="0.5"/>
<rect x="1358.8" y="156.8" width="11.8" height="3.4" fill="#ee0000" stroke="#700" stroke-width="0.4"/>
<path d="M1418,165 L1430,151.5 L1432,153.3 L1420,166.8 Z" fill="#eeb040" stroke="#7a5010" stroke-width="0.6"/><path d="M1418,165 L1420,166.8 L1417.2,167.5 Z" fill="#333"/><path d="M1429.3,152.2 L1430.8,150.6 L1432.8,152.4 L1431.3,154 Z" fill="#e03030"/>
</svg><div class="a" style="left:1155.5px;top:172px;width:299px;height:387px;background:#fff;border:1px solid #c8c8c8;border-right:none"></div><div class="a" style="left:1156px;top:193px;width:298px;height:20px;background:#0b4fd7"></div><svg style="left:0;top:0" width="1500" height="844" viewBox="0 0 1500 844"><rect x="1181.5" y="179.5" width="15" height="8" fill="#fff" stroke="#000" stroke-width="1"/><path d="M1415.8,183 C1418.8,177.5 1426.8,177.5 1429.8,183 C1426.8,188.5 1418.8,188.5 1415.8,183 Z" fill="#fff" stroke="#000" stroke-width="2.2"/><circle cx="1422.8" cy="183" r="3.3" fill="#000"/><path d="M1441.6,182 v-2.5 a3.2,3.2 0 0 1 6.4,0 v2.5" fill="none" stroke="#b4b4b4" stroke-width="1.4"/><rect x="1440.0" y="182" width="9.6" height="7" fill="#b4b4b4"/><rect x="1181" y="199" width="16" height="9" fill="#3b4350"/><path d="M1415.8,203 C1418.8,197.5 1426.8,197.5 1429.8,203 C1426.8,208.5 1418.8,208.5 1415.8,203 Z" fill="#fff" stroke="#000" stroke-width="2.2"/><circle cx="1422.8" cy="203" r="3.3" fill="#000"/><path d="M1441.6,202 v-2.5 a3.2,3.2 0 0 1 6.4,0 v2.5" fill="none" stroke="#b4b4b4" stroke-width="1.4"/><rect x="1440.0" y="202" width="9.6" height="7" fill="#b4b4b4"/><path d="M1395,209 L1405.5,197 L1407.2,198.5 L1396.7,210.5 Z" fill="#eeb040" stroke="#7a5010" stroke-width="0.6"/><path d="M1404.8,197.7 L1406,196.3 L1407.8,197.8 L1406.6,199.2 Z" fill="#e03030"/><rect x="1181" y="219" width="16" height="9" fill="#000"/><path d="M1415.8,223 C1418.8,217.5 1426.8,217.5 1429.8,223 C1426.8,228.5 1418.8,228.5 1415.8,223 Z" fill="#fff" stroke="#000" stroke-width="2.2"/><circle cx="1422.8" cy="223" r="3.3" fill="#000"/><path d="M1441.6,222 v-2.5 a3.2,3.2 0 0 1 6.4,0 v2.5" fill="none" stroke="#b4b4b4" stroke-width="1.4"/><rect x="1440.0" y="222" width="9.6" height="7" fill="#b4b4b4"/></svg><span class="t" style="left:1203px;top:177px;font-size:13px;color:#000">0</span><span class="t" style="left:1203px;top:197px;font-size:13px;color:#fff;letter-spacing:0.15px">Números catastrales</span><span class="t" style="left:1203px;top:217px;font-size:13px;color:#000;letter-spacing:0.1px">Texto</span><svg style="left:1155px;top:561px" width="36" height="16" viewBox="0 0 36 16">
<circle cx="9" cy="8" r="6.9" fill="#6b6b6b"/><path d="M6.3,5.3 L11.7,10.7 M11.7,5.3 L6.3,10.7" stroke="#fff" stroke-width="1.8" stroke-linecap="round"/>
<circle cx="27" cy="8" r="6.9" fill="#6b6b6b"/><rect x="25.2" y="4.8" width="5" height="4" fill="none" stroke="#fff" stroke-width="1"/><rect x="23.5" y="6.8" width="5" height="4" fill="#6b6b6b" stroke="#fff" stroke-width="1"/>
</svg><span class="t" style="left:1274px;top:565.5px;font-size:11px;color:#2a2a2a;letter-spacing:0.4px">Filtro de selección</span><div class="a" style="left:1155px;top:579px;width:300px;height:2px;background:#d2d2d2"></div><div class="a" style="left:1167px;top:594px;width:276px;height:135px;background:#e4e4e4;border-top:1px solid #dadada"></div><span class="t" style="left:1174px;top:586.5px;font-size:11px;color:#1a1a1a;letter-spacing:0.3px">Filtro</span><div class="a" style="left:1277.5px;top:614.5px;width:150px;height:21px;background:#fff;border:1px solid #cdd0d4;border-radius:5px"></div><span class="t" style="left:1281.5px;top:618.5px;font-size:13px;color:#111">Círculo</span><svg style="left:1409.0px;top:617.5px" width="16" height="15" viewBox="0 0 16 15"><rect x="0" y="0" width="16" height="15" rx="3.5" fill="#1b7cf4"/><path d="M5,6.0 L8,3.0 L11,6.0 M5,9.0 L8,12.0 L11,9.0" fill="none" stroke="#fff" stroke-width="1.3" stroke-linecap="round" stroke-linejoin="round"/></svg><div class="a" style="left:1277.5px;top:640.5px;width:150px;height:21px;background:#fff;border:1px solid #cdd0d4;border-radius:5px"></div><span class="t" style="left:1281.5px;top:644.5px;font-size:13px;color:#111">Diámetro</span><svg style="left:1409.0px;top:643.5px" width="16" height="15" viewBox="0 0 16 15"><rect x="0" y="0" width="16" height="15" rx="3.5" fill="#1b7cf4"/><path d="M5,6.0 L8,3.0 L11,6.0 M5,9.0 L8,12.0 L11,9.0" fill="none" stroke="#fff" stroke-width="1.3" stroke-linecap="round" stroke-linejoin="round"/></svg><div class="a" style="left:1277.5px;top:666.5px;width:150px;height:21px;background:#fff;border:1px solid #cdd0d4;border-radius:5px"></div><span class="t" style="left:1281.5px;top:670.5px;font-size:13px;color:#111">= (igual a)</span><svg style="left:1409.0px;top:669.5px" width="16" height="15" viewBox="0 0 16 15"><rect x="0" y="0" width="16" height="15" rx="3.5" fill="#1b7cf4"/><path d="M5,6.0 L8,3.0 L11,6.0 M5,9.0 L8,12.0 L11,9.0" fill="none" stroke="#fff" stroke-width="1.3" stroke-linecap="round" stroke-linejoin="round"/></svg><div class="a" style="left:1278px;top:692.7px;width:149.5px;height:19.7px;background:#fff;border-bottom:1px solid #cfcfcf"></div><span class="t" style="left:1280px;top:697px;font-size:13px;color:#111">1</span><span class="t" style="left:1182px;top:620px;font-size:13px;color:#151515;letter-spacing:0.1px">Tipo:</span><span class="t" style="left:1182px;top:646px;font-size:13px;color:#151515;letter-spacing:0.1px">Característica:</span><span class="t" style="left:1182px;top:672px;font-size:13px;color:#151515;letter-spacing:0.1px">Comparación:</span><span class="t" style="left:1182px;top:697px;font-size:13px;color:#151515;letter-spacing:0.1px">Valor:</span><div class="a" style="left:1167.5px;top:744.3px;width:69px;height:25.2px;background:linear-gradient(#f8f8f8,#ececec 50%,#e4e4e4);border:1px solid #a8a8a8"></div><div class="a" style="left:1236px;top:744.3px;width:69px;height:25.2px;background:linear-gradient(#f8f8f8,#ececec 50%,#e4e4e4);border:1px solid #a8a8a8"></div><div class="a" style="left:1305px;top:744.3px;width:69px;height:25.2px;background:linear-gradient(#f8f8f8,#ececec 50%,#e4e4e4);border:1px solid #a8a8a8"></div><div class="a" style="left:1374px;top:744.3px;width:68.5px;height:25.2px;background:linear-gradient(#f8f8f8,#ececec 50%,#e4e4e4);border:1px solid #a8a8a8"></div><svg style="left:0;top:0" width="1500" height="844" viewBox="0 0 1500 844">
<rect x="1194.5" y="750.5" width="12.5" height="12.5" fill="#f89090" stroke="#a03030" stroke-width="0.7" stroke-dasharray="1.2,1"/>
<rect x="1263" y="749" width="10" height="10" fill="#f89090" stroke="#603030" stroke-width="0.8"/>
<rect x="1266" y="752.5" width="10" height="10" fill="#f89090" stroke="#603030" stroke-width="0.7" stroke-dasharray="1.2,1"/>
<rect x="1332" y="749.5" width="10" height="10" fill="#f89090" stroke="#603030" stroke-width="0.8"/>
<rect x="1335.5" y="753.5" width="10" height="9" fill="#fff" stroke="#333" stroke-width="0.7" stroke-dasharray="1.2,1"/>
<rect x="1401" y="749.5" width="10" height="10" fill="#fff" stroke="#333" stroke-width="0.8"/>
<rect x="1404.5" y="753.5" width="10" height="9" fill="none" stroke="#333" stroke-width="0.7" stroke-dasharray="1.2,1"/>
<rect x="1404.5" y="753.5" width="6.5" height="6" fill="#f89090"/>
</svg>
<div class="a" style="left:1455px;top:122px;width:45px;height:677px;background:linear-gradient(90deg,#f3f3f3 0,#e4e4e4 40%,#d0d0d0 85%,#bfbfbf 100%)"></div><div class="grip"><i style="left:1463.0px;top:131px;width:2px;height:2px;background:#9a9a9a"></i><i style="left:1468.2px;top:131px;width:2px;height:2px;background:#9a9a9a"></i><i style="left:1473.4px;top:131px;width:2px;height:2px;background:#9a9a9a"></i><i style="left:1478.6px;top:131px;width:2px;height:2px;background:#9a9a9a"></i><i style="left:1483.8px;top:131px;width:2px;height:2px;background:#9a9a9a"></i><i style="left:1489.0px;top:131px;width:2px;height:2px;background:#9a9a9a"></i></div><div class="a" style="left:1457px;top:276px;width:42px;height:0;border-top:1px dotted #777"></div><div class="a" style="left:1457px;top:425.5px;width:42px;height:0;border-top:1px dotted #777"></div><div class="a" style="left:1457px;top:528px;width:42px;height:0;border-top:1px dotted #777"></div><div class="a" style="left:1456.3px;top:135px;width:42.5px;height:42.5px;background:#b8b8b8;border-radius:6px"></div><div class="a" style="left:1456.3px;top:330.3px;width:42.5px;height:42.69999999999999px;background:#b8b8b8;border-radius:6px"></div><div class="a" style="left:1456.3px;top:433.7px;width:42.5px;height:41.69999999999999px;background:#b8b8b8;border-radius:6px"></div><svg style="left:0;top:0" width="1500" height="844" viewBox="0 0 1500 844"><rect x="1463.5" y="142.5" width="27" height="27" fill="#fff" stroke="#000" stroke-width="1"/><rect x="1463.5" y="142.5" width="27" height="4.5" fill="#000"/><rect x="1464.5" y="143.3" width="3" height="3" fill="#fff"/><rect x="1463.5" y="189.5" width="27" height="27" fill="#fff" stroke="#000" stroke-width="1"/><rect x="1463.5" y="189.5" width="27" height="4.5" fill="#000"/><rect x="1464.5" y="190.3" width="3" height="3" fill="#fff"/><rect x="1463.5" y="235.5" width="27" height="27" fill="#fff" stroke="#000" stroke-width="1"/><rect x="1463.5" y="235.5" width="27" height="4.5" fill="#000"/><rect x="1464.5" y="236.3" width="3" height="3" fill="#fff"/><rect x="1463.5" y="291.5" width="27" height="27" fill="#fff" stroke="#000" stroke-width="1"/><rect x="1463.5" y="291.5" width="27" height="4.5" fill="#000"/><rect x="1464.5" y="292.3" width="3" height="3" fill="#fff"/><rect x="1463.5" y="338.2" width="27" height="27" fill="#fff" stroke="#000" stroke-width="1"/><rect x="1463.5" y="338.2" width="27" height="4.5" fill="#000"/><rect x="1464.5" y="339.0" width="3" height="3" fill="#fff"/><rect x="1463.5" y="384.9" width="27" height="27" fill="#fff" stroke="#000" stroke-width="1"/><rect x="1463.5" y="384.9" width="27" height="4.5" fill="#000"/><rect x="1464.5" y="385.7" width="3" height="3" fill="#fff"/><rect x="1463.5" y="440.5" width="27" height="27" fill="#fff" stroke="#000" stroke-width="1"/><rect x="1463.5" y="440.5" width="27" height="4.5" fill="#000"/><rect x="1464.5" y="441.3" width="3" height="3" fill="#fff"/><rect x="1463.5" y="487.2" width="27" height="27" fill="#fff" stroke="#000" stroke-width="1"/><rect x="1463.5" y="487.2" width="27" height="4.5" fill="#000"/><rect x="1464.5" y="488.0" width="3" height="3" fill="#fff"/><path d="M1471,152 L1480,150 L1480,164 L1471,166 Z" fill="#8a8a8a" stroke="#333" stroke-width="0.7"/><path d="M1474,153 L1484,151 L1484,163 L1474,165 Z" fill="#fff" stroke="#333" stroke-width="0.7"/><path d="M1476,162 L1480,154 L1482,161" fill="none" stroke="#e03030" stroke-width="0.8"/><rect x="1468.5" y="199.5" width="12" height="9" fill="#fbf1c4" stroke="#333" stroke-width="0.8"/><circle cx="1480" cy="207" r="5" fill="#fbf1c4" fill-opacity="0.85" stroke="#333" stroke-width="0.8"/><rect x="1468.5" y="245" width="17" height="12" rx="2.5" fill="#f4f4f0" stroke="#b8c8e0" stroke-width="1"/><rect x="1467.5" y="300.0" width="4" height="3.5" fill="#000"/><rect x="1474.5" y="300.0" width="13" height="3.5" fill="#fff" stroke="#000" stroke-width="0.8"/><rect x="1467.5" y="305.5" width="4" height="3.5" fill="#000"/><rect x="1474.5" y="305.5" width="13" height="3.5" fill="#fff" stroke="#000" stroke-width="0.8"/><rect x="1467.5" y="311.0" width="4" height="3.5" fill="#000"/><rect x="1474.5" y="311.0" width="13" height="3.5" fill="#fff" stroke="#000" stroke-width="0.8"/><path d="M1469,346.7 L1485,346.7 L1479,353.7 L1479,360.7 L1475,358.7 L1475,353.7 Z" fill="#b0b0b0" stroke="#555" stroke-width="0.7"/><path d="M1469,393.4 L1476,397.4 L1476,403.4 L1469,407.4 Z" fill="#fff" stroke="#333" stroke-width="0.8"/><rect x="1476" y="396.4" width="9" height="8" fill="#8a8a8a" stroke="#555" stroke-width="0.6"/><line x1="1466" y1="400.4" x2="1489" y2="400.4" stroke="#e06060" stroke-width="0.6" stroke-dasharray="1.5,1"/><line x1="1467" y1="449" x2="1481" y2="449" stroke="#777" stroke-width="0.8"/><line x1="1467" y1="452" x2="1480" y2="452" stroke="#777" stroke-width="0.8"/><line x1="1467" y1="455" x2="1479" y2="455" stroke="#777" stroke-width="0.8"/><line x1="1467" y1="458" x2="1478" y2="458" stroke="#777" stroke-width="0.8"/><line x1="1464" y1="463.5" x2="1490" y2="463.5" stroke="#000" stroke-width="0.6"/><line x1="1473" y1="465.5" x2="1488" y2="465.5" stroke="#000" stroke-width="0.8"/><rect x="1470" y="495.7" width="14" height="16" rx="1" fill="#c98b2a" stroke="#87570c" stroke-width="0.7"/><rect x="1472" y="497.7" width="10" height="12" fill="#f5f5f5"/><rect x="1474" y="494.2" width="6" height="3" fill="#999"/><path d="M1465,549.4 L1471,549.4 A3.7,3.7 0 0 1 1471,556.8 L1467.2,556.8 M1471,556.8 A4.3,4.3 0 0 1 1471,565.4 L1465,565.4 M1478.7,548.9 L1484,548.9 A5.8,5.8 0 0 1 1489.8,554.7 L1489.8,559.5 A5.8,5.8 0 0 1 1484,565.3 L1478.7,565.3 Z" fill="none" stroke="#111" stroke-width="1.3"/></svg>
<div class="a" style="left:565px;top:235px;width:370px;height:372px;background:#7e7e7e;border-radius:3px"></div><div class="a" style="left:566px;top:236px;width:368px;height:370px;background:#a6a6a6;border-radius:2px"></div><div class="a" style="left:568px;top:238px;width:364px;height:366px;background:#ececec"></div><span class="t" style="left:587px;top:262px;font-size:13px;color:#000;letter-spacing:0.1px">Capa principal:</span><span class="t" style="left:587px;top:293px;font-size:13px;color:#000;letter-spacing:0.1px">Nombre de capa:</span><div class="a" style="left:698.5px;top:257.3px;width:214px;height:21.3px;background:#fff;border:1px solid #cdd0d4;border-radius:5px"></div><svg style="left:894.0px;top:260.3px" width="16" height="15.3" viewBox="0 0 16 15.3"><rect x="0" y="0" width="16" height="15.3" rx="3.5" fill="#1b7cf4"/><path d="M5,6.15 L8,3.1500000000000004 L11,6.15 M5,9.15 L8,12.15 L11,9.15" fill="none" stroke="#fff" stroke-width="1.3" stroke-linecap="round" stroke-linejoin="round"/></svg><div class="a" style="left:698.7px;top:289.5px;width:213.5px;height:20px;background:#fff;border-bottom:1px solid #cfcfcf"></div><span class="t" style="left:700px;top:294px;font-size:13px;color:#111;letter-spacing:0.15px">Puntos de referencia</span><div class="a" style="left:587px;top:324px;width:326px;height:168px;background:#e4e4e4;border-top:1px solid #dadada"></div><span class="t" style="left:594px;top:317px;font-size:11px;color:#1a1a1a;letter-spacing:0.3px">Atributos</span><span class="t" style="right:790.5px;top:349px;font-size:13px;color:#000;letter-spacing:0.1px">Color:</span><span class="t" style="right:790.5px;top:381px;font-size:13px;color:#000;letter-spacing:0.1px">Grosor de la línea:</span><span class="t" style="right:790.5px;top:412.5px;font-size:13px;color:#000;letter-spacing:0.1px">Tipo de línea:</span><div class="a" style="left:718.8px;top:344.7px;width:178.7px;height:21px;background:#fff;border:1px solid #cdd0d4;border-radius:5px"></div><span class="t" style="left:744.3px;top:348.5px;font-size:13px;color:#000;letter-spacing:0.1px">Negro</span><div class="a" style="left:722.3px;top:350.4px;width:16px;height:9px;background:#000"></div><svg style="left:879.0px;top:347.7px" width="16" height="15" viewBox="0 0 16 15"><rect x="0" y="0" width="16" height="15" rx="3.5" fill="#1b7cf4"/><path d="M5,6.0 L8,3.0 L11,6.0 M5,9.0 L8,12.0 L11,9.0" fill="none" stroke="#fff" stroke-width="1.3" stroke-linecap="round" stroke-linejoin="round"/></svg><div class="a" style="left:718.8px;top:376.5px;width:178.7px;height:21px;background:#fff;border:1px solid #cdd0d4;border-radius:5px"></div><span class="t" style="left:744.3px;top:380.3px;font-size:13px;color:#000;letter-spacing:0.1px">0.25mm (ISO)</span><div class="a" style="left:722.3px;top:386.0px;width:16px;height:1px;background:#111"></div><svg style="left:879.0px;top:379.5px" width="16" height="15" viewBox="0 0 16 15"><rect x="0" y="0" width="16" height="15" rx="3.5" fill="#1b7cf4"/><path d="M5,6.0 L8,3.0 L11,6.0 M5,9.0 L8,12.0 L11,9.0" fill="none" stroke="#fff" stroke-width="1.3" stroke-linecap="round" stroke-linejoin="round"/></svg><div class="a" style="left:718.8px;top:408.5px;width:178.7px;height:21px;background:#fff;border:1px solid #cdd0d4;border-radius:5px"></div><span class="t" style="left:722.8px;top:412.3px;font-size:13px;color:#000;letter-spacing:0.1px">Contínua</span><svg style="left:879.0px;top:411.5px" width="16" height="15" viewBox="0 0 16 15"><rect x="0" y="0" width="16" height="15" rx="3.5" fill="#1b7cf4"/><path d="M5,6.0 L8,3.0 L11,6.0 M5,9.0 L8,12.0 L11,9.0" fill="none" stroke="#fff" stroke-width="1.3" stroke-linecap="round" stroke-linejoin="round"/></svg><svg style="left:602px;top:440.4px" width="14" height="14" viewBox="0 0 14 14"><rect x="0" y="0" width="14" height="14" rx="3" fill="#1b7cf4"/><path d="M3.2,7.2 L5.9,10.2 L10.8,3.8" fill="none" stroke="#fff" stroke-width="1.8" stroke-linecap="round" stroke-linejoin="round"/></svg><span class="t" style="left:620.5px;top:440.5px;font-size:13px;color:#000;letter-spacing:0.1px">Trazable</span><svg style="left:602px;top:463.6px" width="14" height="14" viewBox="0 0 14 14"><rect x="0" y="0" width="14" height="14" rx="3" fill="#1b7cf4"/><path d="M3.2,7.2 L5.9,10.2 L10.8,3.8" fill="none" stroke="#fff" stroke-width="1.8" stroke-linecap="round" stroke-linejoin="round"/></svg><span class="t" style="left:620.5px;top:463.5px;font-size:13px;color:#000;letter-spacing:0.1px">Ajustable</span><svg style="left:586.8px;top:507.2px" width="14" height="14" viewBox="0 0 14 14"><rect x="0" y="0" width="14" height="14" rx="3" fill="#1b7cf4"/><path d="M3.2,7.2 L5.9,10.2 L10.8,3.8" fill="none" stroke="#fff" stroke-width="1.8" stroke-linecap="round" stroke-linejoin="round"/></svg><span class="t" style="left:605px;top:508px;font-size:13px;color:#000;letter-spacing:0.1px">Mover la selección a la nueva capa</span><div class="a" style="left:740px;top:566.8px;width:81px;height:20.5px;background:#fff;border-radius:5px;box-shadow:0 0.5px 1.5px rgba(0,0,0,0.35)"></div><span class="t" style="left:754px;top:570px;font-size:13px;color:#111;letter-spacing:0.15px">Cancelar</span><div class="a" style="left:837px;top:566.8px;width:75.5px;height:20.5px;background:linear-gradient(#3a90f8,#1b78f2);border-radius:5px;box-shadow:0 0.5px 1.5px rgba(0,0,0,0.3)"></div><span class="t" style="left:851px;top:570px;font-size:13px;color:#fff;letter-spacing:0.15px">Aceptar</span><svg style="left:700px;top:460px" width="110" height="110" viewBox="700 460 110 110">
<circle cx="753" cy="514" r="37.3" fill="none" stroke="#a8bbce" stroke-opacity="0.95" stroke-width="2.2"/>
<circle cx="753" cy="514" r="35.2" fill="none" stroke="#b6c6d6" stroke-opacity="0.8" stroke-width="2.2"/>
<circle cx="753" cy="514" r="33.2" fill="none" stroke="#cad6e2" stroke-opacity="0.65" stroke-width="2"/>
<circle cx="753" cy="514" r="31.3" fill="none" stroke="#dde5ec" stroke-opacity="0.5" stroke-width="2"/>
<path d="M753,514.5 L753,536 L757.7,531.6 L761.4,540 L764.6,538.6 L761.1,530.4 L767.8,530.4 Z" fill="#fff" stroke="#000" stroke-width="1.1" stroke-linejoin="round"/>
</svg>
</body></html>
